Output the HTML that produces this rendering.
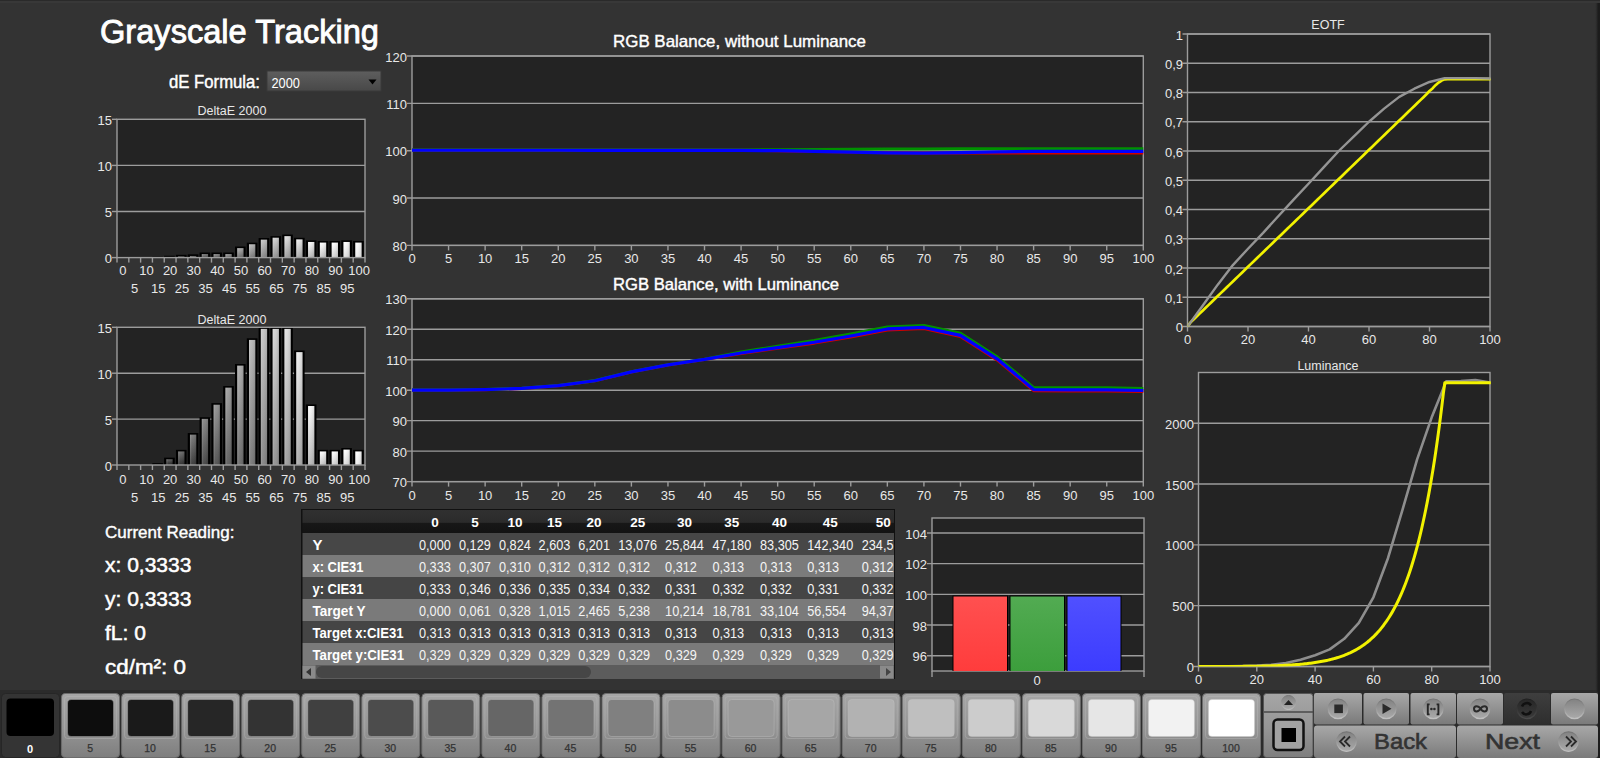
<!DOCTYPE html><html><head><meta charset="utf-8"><style>html,body{margin:0;padding:0;width:1600px;height:758px;overflow:hidden;background:#333}</style></head><body><svg width="1600" height="758" viewBox="0 0 1600 758" font-family='"Liberation Sans", sans-serif' style="position:absolute;left:0;top:0">
<rect x="0" y="0" width="1600" height="758" fill="#333333"/>
<text x="100" y="42.5" font-size="34" fill="#ffffff" text-anchor="start" font-weight="normal" textLength="279" lengthAdjust="spacingAndGlyphs" stroke="#ffffff" stroke-width="0.9">Grayscale Tracking</text>
<text x="169" y="87.5" font-size="18" fill="#ffffff" text-anchor="start" font-weight="normal" textLength="91" lengthAdjust="spacingAndGlyphs" stroke="#fff" stroke-width="0.45">dE Formula:</text>
<defs><linearGradient id="dd" x1="0" y1="0" x2="0" y2="1"><stop offset="0" stop-color="#5e5e5e"/><stop offset="1" stop-color="#484848"/></linearGradient></defs>
<rect x="267" y="71" width="114" height="20" fill="url(#dd)" stroke="#3a3a3a" stroke-width="1"/>
<text x="271.5" y="87.8" font-size="14.5" fill="#ffffff" text-anchor="start" font-weight="normal" textLength="28.5" lengthAdjust="spacingAndGlyphs">2000</text>
<polygon points="368.5,79.5 376.5,79.5 372.5,84.5" fill="#000"/>
<defs>
</defs>
<linearGradient id="barhl" x1="0" y1="0" x2="1" y2="0"><stop offset="0" stop-color="#fff" stop-opacity="0.22"/><stop offset="0.3" stop-color="#fff" stop-opacity="0.05"/><stop offset="1" stop-color="#000" stop-opacity="0.12"/></linearGradient>
<rect x="117" y="119.3" width="248" height="138.3" fill="#232323"/>
<line x1="117" y1="211.5" x2="365" y2="211.5" stroke="#9c9c9c" stroke-width="1.4"/>
<line x1="117" y1="165.4" x2="365" y2="165.4" stroke="#9c9c9c" stroke-width="1.4"/>
<line x1="112" y1="257.6" x2="117" y2="257.6" stroke="#9c9c9c" stroke-width="1.4"/>
<text x="112" y="263.1" font-size="13" fill="#e8e8e8" text-anchor="end" font-weight="normal" >0</text>
<line x1="112" y1="211.5" x2="117" y2="211.5" stroke="#9c9c9c" stroke-width="1.4"/>
<text x="112" y="217" font-size="13" fill="#e8e8e8" text-anchor="end" font-weight="normal" >5</text>
<line x1="112" y1="165.4" x2="117" y2="165.4" stroke="#9c9c9c" stroke-width="1.4"/>
<text x="112" y="170.9" font-size="13" fill="#e8e8e8" text-anchor="end" font-weight="normal" >10</text>
<line x1="112" y1="119.3" x2="117" y2="119.3" stroke="#9c9c9c" stroke-width="1.4"/>
<text x="112" y="124.8" font-size="13" fill="#e8e8e8" text-anchor="end" font-weight="normal" >15</text>
<linearGradient id="ga0" x1="0" y1="0" x2="0" y2="1"><stop offset="0" stop-color="rgb(45,45,45)"/><stop offset="1" stop-color="rgb(0,0,0)"/></linearGradient>
<linearGradient id="ga1" x1="0" y1="0" x2="0" y2="1"><stop offset="0" stop-color="rgb(58,58,58)"/><stop offset="1" stop-color="rgb(0,0,0)"/></linearGradient>
<linearGradient id="ga2" x1="0" y1="0" x2="0" y2="1"><stop offset="0" stop-color="rgb(71,71,71)"/><stop offset="1" stop-color="rgb(4,4,4)"/></linearGradient>
<rect x="140.52" y="257.14" width="10.61" height="0.46" fill="#000"/>
<rect x="142.72" y="258.74" width="6.31" height="0" fill="url(#ga2)"/>
<rect x="142.72" y="258.74" width="6.31" height="0" fill="url(#barhl)"/>
<linearGradient id="ga3" x1="0" y1="0" x2="0" y2="1"><stop offset="0" stop-color="rgb(83,83,83)"/><stop offset="1" stop-color="rgb(16,16,16)"/></linearGradient>
<rect x="152.33" y="256.68" width="10.61" height="0.92" fill="#000"/>
<rect x="154.53" y="258.28" width="6.31" height="0" fill="url(#ga3)"/>
<rect x="154.53" y="258.28" width="6.31" height="0" fill="url(#barhl)"/>
<linearGradient id="ga4" x1="0" y1="0" x2="0" y2="1"><stop offset="0" stop-color="rgb(96,96,96)"/><stop offset="1" stop-color="rgb(29,29,29)"/></linearGradient>
<rect x="164.14" y="255.76" width="10.61" height="1.84" fill="#000"/>
<rect x="166.34" y="257.36" width="6.31" height="0.24" fill="url(#ga4)"/>
<rect x="166.34" y="257.36" width="6.31" height="0.24" fill="url(#barhl)"/>
<linearGradient id="ga5" x1="0" y1="0" x2="0" y2="1"><stop offset="0" stop-color="rgb(109,109,109)"/><stop offset="1" stop-color="rgb(42,42,42)"/></linearGradient>
<rect x="175.95" y="254.83" width="10.61" height="2.77" fill="#000"/>
<rect x="178.15" y="256.43" width="6.31" height="1.17" fill="url(#ga5)"/>
<rect x="178.15" y="256.43" width="6.31" height="1.17" fill="url(#barhl)"/>
<linearGradient id="ga6" x1="0" y1="0" x2="0" y2="1"><stop offset="0" stop-color="rgb(121,121,121)"/><stop offset="1" stop-color="rgb(54,54,54)"/></linearGradient>
<rect x="187.76" y="254.37" width="10.61" height="3.23" fill="#000"/>
<rect x="189.96" y="255.97" width="6.31" height="1.63" fill="url(#ga6)"/>
<rect x="189.96" y="255.97" width="6.31" height="1.63" fill="url(#barhl)"/>
<linearGradient id="ga7" x1="0" y1="0" x2="0" y2="1"><stop offset="0" stop-color="rgb(134,134,134)"/><stop offset="1" stop-color="rgb(67,67,67)"/></linearGradient>
<rect x="199.57" y="252.53" width="10.61" height="5.07" fill="#000"/>
<rect x="201.77" y="254.13" width="6.31" height="3.47" fill="url(#ga7)"/>
<rect x="201.77" y="254.13" width="6.31" height="3.47" fill="url(#barhl)"/>
<linearGradient id="ga8" x1="0" y1="0" x2="0" y2="1"><stop offset="0" stop-color="rgb(147,147,147)"/><stop offset="1" stop-color="rgb(80,80,80)"/></linearGradient>
<rect x="211.38" y="252.53" width="10.61" height="5.07" fill="#000"/>
<rect x="213.58" y="254.13" width="6.31" height="3.47" fill="url(#ga8)"/>
<rect x="213.58" y="254.13" width="6.31" height="3.47" fill="url(#barhl)"/>
<linearGradient id="ga9" x1="0" y1="0" x2="0" y2="1"><stop offset="0" stop-color="rgb(160,160,160)"/><stop offset="1" stop-color="rgb(93,93,93)"/></linearGradient>
<rect x="223.19" y="252.53" width="10.61" height="5.07" fill="#000"/>
<rect x="225.39" y="254.13" width="6.31" height="3.47" fill="url(#ga9)"/>
<rect x="225.39" y="254.13" width="6.31" height="3.47" fill="url(#barhl)"/>
<linearGradient id="ga10" x1="0" y1="0" x2="0" y2="1"><stop offset="0" stop-color="rgb(173,173,173)"/><stop offset="1" stop-color="rgb(106,106,106)"/></linearGradient>
<rect x="235" y="246.54" width="10.61" height="11.06" fill="#000"/>
<rect x="237.2" y="248.14" width="6.31" height="9.46" fill="url(#ga10)"/>
<rect x="237.2" y="248.14" width="6.31" height="9.46" fill="url(#barhl)"/>
<linearGradient id="ga11" x1="0" y1="0" x2="0" y2="1"><stop offset="0" stop-color="rgb(185,185,185)"/><stop offset="1" stop-color="rgb(118,118,118)"/></linearGradient>
<rect x="246.8" y="242.66" width="10.61" height="14.94" fill="#000"/>
<rect x="249" y="244.26" width="6.31" height="13.34" fill="url(#ga11)"/>
<rect x="249" y="244.26" width="6.31" height="13.34" fill="url(#barhl)"/>
<linearGradient id="ga12" x1="0" y1="0" x2="0" y2="1"><stop offset="0" stop-color="rgb(198,198,198)"/><stop offset="1" stop-color="rgb(131,131,131)"/></linearGradient>
<rect x="258.61" y="238.05" width="10.61" height="19.55" fill="#000"/>
<rect x="260.81" y="239.65" width="6.31" height="17.95" fill="url(#ga12)"/>
<rect x="260.81" y="239.65" width="6.31" height="17.95" fill="url(#barhl)"/>
<linearGradient id="ga13" x1="0" y1="0" x2="0" y2="1"><stop offset="0" stop-color="rgb(211,211,211)"/><stop offset="1" stop-color="rgb(144,144,144)"/></linearGradient>
<rect x="270.42" y="236.12" width="10.61" height="21.48" fill="#000"/>
<rect x="272.62" y="237.72" width="6.31" height="19.88" fill="url(#ga13)"/>
<rect x="272.62" y="237.72" width="6.31" height="19.88" fill="url(#barhl)"/>
<linearGradient id="ga14" x1="0" y1="0" x2="0" y2="1"><stop offset="0" stop-color="rgb(223,223,223)"/><stop offset="1" stop-color="rgb(156,156,156)"/></linearGradient>
<rect x="282.23" y="234.55" width="10.61" height="23.05" fill="#000"/>
<rect x="284.43" y="236.15" width="6.31" height="21.45" fill="url(#ga14)"/>
<rect x="284.43" y="236.15" width="6.31" height="21.45" fill="url(#barhl)"/>
<linearGradient id="ga15" x1="0" y1="0" x2="0" y2="1"><stop offset="0" stop-color="rgb(236,236,236)"/><stop offset="1" stop-color="rgb(169,169,169)"/></linearGradient>
<rect x="294.04" y="237.78" width="10.61" height="19.82" fill="#000"/>
<rect x="296.24" y="239.38" width="6.31" height="18.22" fill="url(#ga15)"/>
<rect x="296.24" y="239.38" width="6.31" height="18.22" fill="url(#barhl)"/>
<linearGradient id="ga16" x1="0" y1="0" x2="0" y2="1"><stop offset="0" stop-color="rgb(249,249,249)"/><stop offset="1" stop-color="rgb(182,182,182)"/></linearGradient>
<rect x="305.85" y="240.36" width="10.61" height="17.24" fill="#000"/>
<rect x="308.05" y="241.96" width="6.31" height="15.64" fill="url(#ga16)"/>
<rect x="308.05" y="241.96" width="6.31" height="15.64" fill="url(#barhl)"/>
<linearGradient id="ga17" x1="0" y1="0" x2="0" y2="1"><stop offset="0" stop-color="rgb(255,255,255)"/><stop offset="1" stop-color="rgb(195,195,195)"/></linearGradient>
<rect x="317.66" y="241" width="10.61" height="16.6" fill="#000"/>
<rect x="319.86" y="242.6" width="6.31" height="15" fill="url(#ga17)"/>
<rect x="319.86" y="242.6" width="6.31" height="15" fill="url(#barhl)"/>
<linearGradient id="ga18" x1="0" y1="0" x2="0" y2="1"><stop offset="0" stop-color="rgb(255,255,255)"/><stop offset="1" stop-color="rgb(208,208,208)"/></linearGradient>
<rect x="329.47" y="241" width="10.61" height="16.6" fill="#000"/>
<rect x="331.67" y="242.6" width="6.31" height="15" fill="url(#ga18)"/>
<rect x="331.67" y="242.6" width="6.31" height="15" fill="url(#barhl)"/>
<linearGradient id="ga19" x1="0" y1="0" x2="0" y2="1"><stop offset="0" stop-color="rgb(255,255,255)"/><stop offset="1" stop-color="rgb(220,220,220)"/></linearGradient>
<rect x="341.28" y="240.36" width="10.61" height="17.24" fill="#000"/>
<rect x="343.48" y="241.96" width="6.31" height="15.64" fill="url(#ga19)"/>
<rect x="343.48" y="241.96" width="6.31" height="15.64" fill="url(#barhl)"/>
<linearGradient id="ga20" x1="0" y1="0" x2="0" y2="1"><stop offset="0" stop-color="rgb(255,255,255)"/><stop offset="1" stop-color="rgb(233,233,233)"/></linearGradient>
<rect x="353.09" y="241" width="10.61" height="16.6" fill="#000"/>
<rect x="355.29" y="242.6" width="6.31" height="15" fill="url(#ga20)"/>
<rect x="355.29" y="242.6" width="6.31" height="15" fill="url(#barhl)"/>
<rect x="117" y="119.3" width="248" height="138.3" fill="none" stroke="#9c9c9c" stroke-width="1.4"/>
<line x1="117" y1="257.6" x2="117" y2="262.6" stroke="#9c9c9c" stroke-width="1.4"/>
<line x1="128.81" y1="257.6" x2="128.81" y2="262.6" stroke="#9c9c9c" stroke-width="1.4"/>
<line x1="140.62" y1="257.6" x2="140.62" y2="262.6" stroke="#9c9c9c" stroke-width="1.4"/>
<line x1="152.43" y1="257.6" x2="152.43" y2="262.6" stroke="#9c9c9c" stroke-width="1.4"/>
<line x1="164.24" y1="257.6" x2="164.24" y2="262.6" stroke="#9c9c9c" stroke-width="1.4"/>
<line x1="176.05" y1="257.6" x2="176.05" y2="262.6" stroke="#9c9c9c" stroke-width="1.4"/>
<line x1="187.86" y1="257.6" x2="187.86" y2="262.6" stroke="#9c9c9c" stroke-width="1.4"/>
<line x1="199.67" y1="257.6" x2="199.67" y2="262.6" stroke="#9c9c9c" stroke-width="1.4"/>
<line x1="211.48" y1="257.6" x2="211.48" y2="262.6" stroke="#9c9c9c" stroke-width="1.4"/>
<line x1="223.29" y1="257.6" x2="223.29" y2="262.6" stroke="#9c9c9c" stroke-width="1.4"/>
<line x1="235.1" y1="257.6" x2="235.1" y2="262.6" stroke="#9c9c9c" stroke-width="1.4"/>
<line x1="246.9" y1="257.6" x2="246.9" y2="262.6" stroke="#9c9c9c" stroke-width="1.4"/>
<line x1="258.71" y1="257.6" x2="258.71" y2="262.6" stroke="#9c9c9c" stroke-width="1.4"/>
<line x1="270.52" y1="257.6" x2="270.52" y2="262.6" stroke="#9c9c9c" stroke-width="1.4"/>
<line x1="282.33" y1="257.6" x2="282.33" y2="262.6" stroke="#9c9c9c" stroke-width="1.4"/>
<line x1="294.14" y1="257.6" x2="294.14" y2="262.6" stroke="#9c9c9c" stroke-width="1.4"/>
<line x1="305.95" y1="257.6" x2="305.95" y2="262.6" stroke="#9c9c9c" stroke-width="1.4"/>
<line x1="317.76" y1="257.6" x2="317.76" y2="262.6" stroke="#9c9c9c" stroke-width="1.4"/>
<line x1="329.57" y1="257.6" x2="329.57" y2="262.6" stroke="#9c9c9c" stroke-width="1.4"/>
<line x1="341.38" y1="257.6" x2="341.38" y2="262.6" stroke="#9c9c9c" stroke-width="1.4"/>
<line x1="353.19" y1="257.6" x2="353.19" y2="262.6" stroke="#9c9c9c" stroke-width="1.4"/>
<line x1="365" y1="257.6" x2="365" y2="262.6" stroke="#9c9c9c" stroke-width="1.4"/>
<text x="122.9" y="275" font-size="13" fill="#e8e8e8" text-anchor="middle" font-weight="normal" >0</text>
<text x="134.71" y="293" font-size="13" fill="#e8e8e8" text-anchor="middle" font-weight="normal" >5</text>
<text x="146.52" y="275" font-size="13" fill="#e8e8e8" text-anchor="middle" font-weight="normal" >10</text>
<text x="158.33" y="293" font-size="13" fill="#e8e8e8" text-anchor="middle" font-weight="normal" >15</text>
<text x="170.14" y="275" font-size="13" fill="#e8e8e8" text-anchor="middle" font-weight="normal" >20</text>
<text x="181.95" y="293" font-size="13" fill="#e8e8e8" text-anchor="middle" font-weight="normal" >25</text>
<text x="193.76" y="275" font-size="13" fill="#e8e8e8" text-anchor="middle" font-weight="normal" >30</text>
<text x="205.57" y="293" font-size="13" fill="#e8e8e8" text-anchor="middle" font-weight="normal" >35</text>
<text x="217.38" y="275" font-size="13" fill="#e8e8e8" text-anchor="middle" font-weight="normal" >40</text>
<text x="229.19" y="293" font-size="13" fill="#e8e8e8" text-anchor="middle" font-weight="normal" >45</text>
<text x="241" y="275" font-size="13" fill="#e8e8e8" text-anchor="middle" font-weight="normal" >50</text>
<text x="252.81" y="293" font-size="13" fill="#e8e8e8" text-anchor="middle" font-weight="normal" >55</text>
<text x="264.62" y="275" font-size="13" fill="#e8e8e8" text-anchor="middle" font-weight="normal" >60</text>
<text x="276.43" y="293" font-size="13" fill="#e8e8e8" text-anchor="middle" font-weight="normal" >65</text>
<text x="288.24" y="275" font-size="13" fill="#e8e8e8" text-anchor="middle" font-weight="normal" >70</text>
<text x="300.05" y="293" font-size="13" fill="#e8e8e8" text-anchor="middle" font-weight="normal" >75</text>
<text x="311.86" y="275" font-size="13" fill="#e8e8e8" text-anchor="middle" font-weight="normal" >80</text>
<text x="323.67" y="293" font-size="13" fill="#e8e8e8" text-anchor="middle" font-weight="normal" >85</text>
<text x="335.48" y="275" font-size="13" fill="#e8e8e8" text-anchor="middle" font-weight="normal" >90</text>
<text x="347.29" y="293" font-size="13" fill="#e8e8e8" text-anchor="middle" font-weight="normal" >95</text>
<text x="359.1" y="275" font-size="13" fill="#e8e8e8" text-anchor="middle" font-weight="normal" >100</text>
<text x="232" y="115" font-size="12.5" fill="#e8e8e8" text-anchor="middle" font-weight="normal" >DeltaE 2000</text>
<linearGradient id="barhl" x1="0" y1="0" x2="1" y2="0"><stop offset="0" stop-color="#fff" stop-opacity="0.22"/><stop offset="0.3" stop-color="#fff" stop-opacity="0.05"/><stop offset="1" stop-color="#000" stop-opacity="0.12"/></linearGradient>
<rect x="117" y="327.3" width="248" height="137.7" fill="#232323"/>
<line x1="117" y1="419.1" x2="365" y2="419.1" stroke="#9c9c9c" stroke-width="1.4"/>
<line x1="117" y1="373.2" x2="365" y2="373.2" stroke="#9c9c9c" stroke-width="1.4"/>
<line x1="112" y1="465" x2="117" y2="465" stroke="#9c9c9c" stroke-width="1.4"/>
<text x="112" y="470.5" font-size="13" fill="#e8e8e8" text-anchor="end" font-weight="normal" >0</text>
<line x1="112" y1="419.1" x2="117" y2="419.1" stroke="#9c9c9c" stroke-width="1.4"/>
<text x="112" y="424.6" font-size="13" fill="#e8e8e8" text-anchor="end" font-weight="normal" >5</text>
<line x1="112" y1="373.2" x2="117" y2="373.2" stroke="#9c9c9c" stroke-width="1.4"/>
<text x="112" y="378.7" font-size="13" fill="#e8e8e8" text-anchor="end" font-weight="normal" >10</text>
<line x1="112" y1="327.3" x2="117" y2="327.3" stroke="#9c9c9c" stroke-width="1.4"/>
<text x="112" y="332.8" font-size="13" fill="#e8e8e8" text-anchor="end" font-weight="normal" >15</text>
<linearGradient id="gb0" x1="0" y1="0" x2="0" y2="1"><stop offset="0" stop-color="rgb(45,45,45)"/><stop offset="1" stop-color="rgb(0,0,0)"/></linearGradient>
<linearGradient id="gb1" x1="0" y1="0" x2="0" y2="1"><stop offset="0" stop-color="rgb(58,58,58)"/><stop offset="1" stop-color="rgb(0,0,0)"/></linearGradient>
<linearGradient id="gb2" x1="0" y1="0" x2="0" y2="1"><stop offset="0" stop-color="rgb(71,71,71)"/><stop offset="1" stop-color="rgb(4,4,4)"/></linearGradient>
<linearGradient id="gb3" x1="0" y1="0" x2="0" y2="1"><stop offset="0" stop-color="rgb(83,83,83)"/><stop offset="1" stop-color="rgb(16,16,16)"/></linearGradient>
<rect x="152.33" y="463.16" width="10.61" height="1.84" fill="#000"/>
<rect x="154.53" y="464.76" width="6.31" height="0.24" fill="url(#gb3)"/>
<rect x="154.53" y="464.76" width="6.31" height="0.24" fill="url(#barhl)"/>
<linearGradient id="gb4" x1="0" y1="0" x2="0" y2="1"><stop offset="0" stop-color="rgb(96,96,96)"/><stop offset="1" stop-color="rgb(29,29,29)"/></linearGradient>
<rect x="164.14" y="457.66" width="10.61" height="7.34" fill="#000"/>
<rect x="166.34" y="459.26" width="6.31" height="5.74" fill="url(#gb4)"/>
<rect x="166.34" y="459.26" width="6.31" height="5.74" fill="url(#barhl)"/>
<linearGradient id="gb5" x1="0" y1="0" x2="0" y2="1"><stop offset="0" stop-color="rgb(109,109,109)"/><stop offset="1" stop-color="rgb(42,42,42)"/></linearGradient>
<rect x="175.95" y="449.85" width="10.61" height="15.15" fill="#000"/>
<rect x="178.15" y="451.45" width="6.31" height="13.55" fill="url(#gb5)"/>
<rect x="178.15" y="451.45" width="6.31" height="13.55" fill="url(#barhl)"/>
<linearGradient id="gb6" x1="0" y1="0" x2="0" y2="1"><stop offset="0" stop-color="rgb(121,121,121)"/><stop offset="1" stop-color="rgb(54,54,54)"/></linearGradient>
<rect x="187.76" y="433.05" width="10.61" height="31.95" fill="#000"/>
<rect x="189.96" y="434.65" width="6.31" height="30.35" fill="url(#gb6)"/>
<rect x="189.96" y="434.65" width="6.31" height="30.35" fill="url(#barhl)"/>
<linearGradient id="gb7" x1="0" y1="0" x2="0" y2="1"><stop offset="0" stop-color="rgb(134,134,134)"/><stop offset="1" stop-color="rgb(67,67,67)"/></linearGradient>
<rect x="199.57" y="417.26" width="10.61" height="47.74" fill="#000"/>
<rect x="201.77" y="418.86" width="6.31" height="46.14" fill="url(#gb7)"/>
<rect x="201.77" y="418.86" width="6.31" height="46.14" fill="url(#barhl)"/>
<linearGradient id="gb8" x1="0" y1="0" x2="0" y2="1"><stop offset="0" stop-color="rgb(147,147,147)"/><stop offset="1" stop-color="rgb(80,80,80)"/></linearGradient>
<rect x="211.38" y="403.13" width="10.61" height="61.87" fill="#000"/>
<rect x="213.58" y="404.73" width="6.31" height="60.27" fill="url(#gb8)"/>
<rect x="213.58" y="404.73" width="6.31" height="60.27" fill="url(#barhl)"/>
<linearGradient id="gb9" x1="0" y1="0" x2="0" y2="1"><stop offset="0" stop-color="rgb(160,160,160)"/><stop offset="1" stop-color="rgb(93,93,93)"/></linearGradient>
<rect x="223.19" y="386.05" width="10.61" height="78.95" fill="#000"/>
<rect x="225.39" y="387.65" width="6.31" height="77.35" fill="url(#gb9)"/>
<rect x="225.39" y="387.65" width="6.31" height="77.35" fill="url(#barhl)"/>
<linearGradient id="gb10" x1="0" y1="0" x2="0" y2="1"><stop offset="0" stop-color="rgb(173,173,173)"/><stop offset="1" stop-color="rgb(106,106,106)"/></linearGradient>
<rect x="235" y="364.02" width="10.61" height="100.98" fill="#000"/>
<rect x="237.2" y="365.62" width="6.31" height="99.38" fill="url(#gb10)"/>
<rect x="237.2" y="365.62" width="6.31" height="99.38" fill="url(#barhl)"/>
<linearGradient id="gb11" x1="0" y1="0" x2="0" y2="1"><stop offset="0" stop-color="rgb(185,185,185)"/><stop offset="1" stop-color="rgb(118,118,118)"/></linearGradient>
<rect x="246.8" y="338.32" width="10.61" height="126.68" fill="#000"/>
<rect x="249" y="339.92" width="6.31" height="125.08" fill="url(#gb11)"/>
<rect x="249" y="339.92" width="6.31" height="125.08" fill="url(#barhl)"/>
<linearGradient id="gb12" x1="0" y1="0" x2="0" y2="1"><stop offset="0" stop-color="rgb(198,198,198)"/><stop offset="1" stop-color="rgb(131,131,131)"/></linearGradient>
<rect x="258.61" y="327.3" width="10.61" height="137.7" fill="#000"/>
<rect x="260.81" y="328.9" width="6.31" height="136.1" fill="url(#gb12)"/>
<rect x="260.81" y="328.9" width="6.31" height="136.1" fill="url(#barhl)"/>
<linearGradient id="gb13" x1="0" y1="0" x2="0" y2="1"><stop offset="0" stop-color="rgb(211,211,211)"/><stop offset="1" stop-color="rgb(144,144,144)"/></linearGradient>
<rect x="270.42" y="327.3" width="10.61" height="137.7" fill="#000"/>
<rect x="272.62" y="328.9" width="6.31" height="136.1" fill="url(#gb13)"/>
<rect x="272.62" y="328.9" width="6.31" height="136.1" fill="url(#barhl)"/>
<linearGradient id="gb14" x1="0" y1="0" x2="0" y2="1"><stop offset="0" stop-color="rgb(223,223,223)"/><stop offset="1" stop-color="rgb(156,156,156)"/></linearGradient>
<rect x="282.23" y="327.3" width="10.61" height="137.7" fill="#000"/>
<rect x="284.43" y="328.9" width="6.31" height="136.1" fill="url(#gb14)"/>
<rect x="284.43" y="328.9" width="6.31" height="136.1" fill="url(#barhl)"/>
<linearGradient id="gb15" x1="0" y1="0" x2="0" y2="1"><stop offset="0" stop-color="rgb(236,236,236)"/><stop offset="1" stop-color="rgb(169,169,169)"/></linearGradient>
<rect x="294.04" y="350.53" width="10.61" height="114.47" fill="#000"/>
<rect x="296.24" y="352.13" width="6.31" height="112.87" fill="url(#gb15)"/>
<rect x="296.24" y="352.13" width="6.31" height="112.87" fill="url(#barhl)"/>
<linearGradient id="gb16" x1="0" y1="0" x2="0" y2="1"><stop offset="0" stop-color="rgb(249,249,249)"/><stop offset="1" stop-color="rgb(182,182,182)"/></linearGradient>
<rect x="305.85" y="404.41" width="10.61" height="60.59" fill="#000"/>
<rect x="308.05" y="406.01" width="6.31" height="58.99" fill="url(#gb16)"/>
<rect x="308.05" y="406.01" width="6.31" height="58.99" fill="url(#barhl)"/>
<linearGradient id="gb17" x1="0" y1="0" x2="0" y2="1"><stop offset="0" stop-color="rgb(255,255,255)"/><stop offset="1" stop-color="rgb(195,195,195)"/></linearGradient>
<rect x="317.66" y="449.85" width="10.61" height="15.15" fill="#000"/>
<rect x="319.86" y="451.45" width="6.31" height="13.55" fill="url(#gb17)"/>
<rect x="319.86" y="451.45" width="6.31" height="13.55" fill="url(#barhl)"/>
<linearGradient id="gb18" x1="0" y1="0" x2="0" y2="1"><stop offset="0" stop-color="rgb(255,255,255)"/><stop offset="1" stop-color="rgb(208,208,208)"/></linearGradient>
<rect x="329.47" y="449.85" width="10.61" height="15.15" fill="#000"/>
<rect x="331.67" y="451.45" width="6.31" height="13.55" fill="url(#gb18)"/>
<rect x="331.67" y="451.45" width="6.31" height="13.55" fill="url(#barhl)"/>
<linearGradient id="gb19" x1="0" y1="0" x2="0" y2="1"><stop offset="0" stop-color="rgb(255,255,255)"/><stop offset="1" stop-color="rgb(220,220,220)"/></linearGradient>
<rect x="341.28" y="448.02" width="10.61" height="16.98" fill="#000"/>
<rect x="343.48" y="449.62" width="6.31" height="15.38" fill="url(#gb19)"/>
<rect x="343.48" y="449.62" width="6.31" height="15.38" fill="url(#barhl)"/>
<linearGradient id="gb20" x1="0" y1="0" x2="0" y2="1"><stop offset="0" stop-color="rgb(255,255,255)"/><stop offset="1" stop-color="rgb(233,233,233)"/></linearGradient>
<rect x="353.09" y="449.85" width="10.61" height="15.15" fill="#000"/>
<rect x="355.29" y="451.45" width="6.31" height="13.55" fill="url(#gb20)"/>
<rect x="355.29" y="451.45" width="6.31" height="13.55" fill="url(#barhl)"/>
<rect x="117" y="327.3" width="248" height="137.7" fill="none" stroke="#9c9c9c" stroke-width="1.4"/>
<line x1="117" y1="465" x2="117" y2="470" stroke="#9c9c9c" stroke-width="1.4"/>
<line x1="128.81" y1="465" x2="128.81" y2="470" stroke="#9c9c9c" stroke-width="1.4"/>
<line x1="140.62" y1="465" x2="140.62" y2="470" stroke="#9c9c9c" stroke-width="1.4"/>
<line x1="152.43" y1="465" x2="152.43" y2="470" stroke="#9c9c9c" stroke-width="1.4"/>
<line x1="164.24" y1="465" x2="164.24" y2="470" stroke="#9c9c9c" stroke-width="1.4"/>
<line x1="176.05" y1="465" x2="176.05" y2="470" stroke="#9c9c9c" stroke-width="1.4"/>
<line x1="187.86" y1="465" x2="187.86" y2="470" stroke="#9c9c9c" stroke-width="1.4"/>
<line x1="199.67" y1="465" x2="199.67" y2="470" stroke="#9c9c9c" stroke-width="1.4"/>
<line x1="211.48" y1="465" x2="211.48" y2="470" stroke="#9c9c9c" stroke-width="1.4"/>
<line x1="223.29" y1="465" x2="223.29" y2="470" stroke="#9c9c9c" stroke-width="1.4"/>
<line x1="235.1" y1="465" x2="235.1" y2="470" stroke="#9c9c9c" stroke-width="1.4"/>
<line x1="246.9" y1="465" x2="246.9" y2="470" stroke="#9c9c9c" stroke-width="1.4"/>
<line x1="258.71" y1="465" x2="258.71" y2="470" stroke="#9c9c9c" stroke-width="1.4"/>
<line x1="270.52" y1="465" x2="270.52" y2="470" stroke="#9c9c9c" stroke-width="1.4"/>
<line x1="282.33" y1="465" x2="282.33" y2="470" stroke="#9c9c9c" stroke-width="1.4"/>
<line x1="294.14" y1="465" x2="294.14" y2="470" stroke="#9c9c9c" stroke-width="1.4"/>
<line x1="305.95" y1="465" x2="305.95" y2="470" stroke="#9c9c9c" stroke-width="1.4"/>
<line x1="317.76" y1="465" x2="317.76" y2="470" stroke="#9c9c9c" stroke-width="1.4"/>
<line x1="329.57" y1="465" x2="329.57" y2="470" stroke="#9c9c9c" stroke-width="1.4"/>
<line x1="341.38" y1="465" x2="341.38" y2="470" stroke="#9c9c9c" stroke-width="1.4"/>
<line x1="353.19" y1="465" x2="353.19" y2="470" stroke="#9c9c9c" stroke-width="1.4"/>
<line x1="365" y1="465" x2="365" y2="470" stroke="#9c9c9c" stroke-width="1.4"/>
<text x="122.9" y="484.2" font-size="13" fill="#e8e8e8" text-anchor="middle" font-weight="normal" >0</text>
<text x="134.71" y="501.7" font-size="13" fill="#e8e8e8" text-anchor="middle" font-weight="normal" >5</text>
<text x="146.52" y="484.2" font-size="13" fill="#e8e8e8" text-anchor="middle" font-weight="normal" >10</text>
<text x="158.33" y="501.7" font-size="13" fill="#e8e8e8" text-anchor="middle" font-weight="normal" >15</text>
<text x="170.14" y="484.2" font-size="13" fill="#e8e8e8" text-anchor="middle" font-weight="normal" >20</text>
<text x="181.95" y="501.7" font-size="13" fill="#e8e8e8" text-anchor="middle" font-weight="normal" >25</text>
<text x="193.76" y="484.2" font-size="13" fill="#e8e8e8" text-anchor="middle" font-weight="normal" >30</text>
<text x="205.57" y="501.7" font-size="13" fill="#e8e8e8" text-anchor="middle" font-weight="normal" >35</text>
<text x="217.38" y="484.2" font-size="13" fill="#e8e8e8" text-anchor="middle" font-weight="normal" >40</text>
<text x="229.19" y="501.7" font-size="13" fill="#e8e8e8" text-anchor="middle" font-weight="normal" >45</text>
<text x="241" y="484.2" font-size="13" fill="#e8e8e8" text-anchor="middle" font-weight="normal" >50</text>
<text x="252.81" y="501.7" font-size="13" fill="#e8e8e8" text-anchor="middle" font-weight="normal" >55</text>
<text x="264.62" y="484.2" font-size="13" fill="#e8e8e8" text-anchor="middle" font-weight="normal" >60</text>
<text x="276.43" y="501.7" font-size="13" fill="#e8e8e8" text-anchor="middle" font-weight="normal" >65</text>
<text x="288.24" y="484.2" font-size="13" fill="#e8e8e8" text-anchor="middle" font-weight="normal" >70</text>
<text x="300.05" y="501.7" font-size="13" fill="#e8e8e8" text-anchor="middle" font-weight="normal" >75</text>
<text x="311.86" y="484.2" font-size="13" fill="#e8e8e8" text-anchor="middle" font-weight="normal" >80</text>
<text x="323.67" y="501.7" font-size="13" fill="#e8e8e8" text-anchor="middle" font-weight="normal" >85</text>
<text x="335.48" y="484.2" font-size="13" fill="#e8e8e8" text-anchor="middle" font-weight="normal" >90</text>
<text x="347.29" y="501.7" font-size="13" fill="#e8e8e8" text-anchor="middle" font-weight="normal" >95</text>
<text x="359.1" y="484.2" font-size="13" fill="#e8e8e8" text-anchor="middle" font-weight="normal" >100</text>
<text x="232" y="323.5" font-size="12.5" fill="#e8e8e8" text-anchor="middle" font-weight="normal" >DeltaE 2000</text>
<rect x="412" y="56" width="731.3" height="189.4" fill="#232323"/>
<line x1="407" y1="245.4" x2="1143.3" y2="245.4" stroke="#9c9c9c" stroke-width="1.4"/>
<text x="407" y="250.9" font-size="13" fill="#e8e8e8" text-anchor="end" font-weight="normal" >80</text>
<line x1="407" y1="198.05" x2="1143.3" y2="198.05" stroke="#9c9c9c" stroke-width="1.4"/>
<text x="407" y="203.55" font-size="13" fill="#e8e8e8" text-anchor="end" font-weight="normal" >90</text>
<line x1="407" y1="150.7" x2="1143.3" y2="150.7" stroke="#9c9c9c" stroke-width="1.4"/>
<text x="407" y="156.2" font-size="13" fill="#e8e8e8" text-anchor="end" font-weight="normal" >100</text>
<line x1="407" y1="103.35" x2="1143.3" y2="103.35" stroke="#9c9c9c" stroke-width="1.4"/>
<text x="407" y="108.85" font-size="13" fill="#e8e8e8" text-anchor="end" font-weight="normal" >110</text>
<line x1="407" y1="56" x2="1143.3" y2="56" stroke="#9c9c9c" stroke-width="1.4"/>
<text x="407" y="61.5" font-size="13" fill="#e8e8e8" text-anchor="end" font-weight="normal" >120</text>
<rect x="412" y="56" width="731.3" height="189.4" fill="none" stroke="#9c9c9c" stroke-width="1.4"/>
<line x1="412" y1="245.4" x2="412" y2="250.4" stroke="#9c9c9c" stroke-width="1.4"/>
<text x="412" y="263" font-size="13" fill="#e8e8e8" text-anchor="middle" font-weight="normal" >0</text>
<line x1="448.56" y1="245.4" x2="448.56" y2="250.4" stroke="#9c9c9c" stroke-width="1.4"/>
<text x="448.56" y="263" font-size="13" fill="#e8e8e8" text-anchor="middle" font-weight="normal" >5</text>
<line x1="485.13" y1="245.4" x2="485.13" y2="250.4" stroke="#9c9c9c" stroke-width="1.4"/>
<text x="485.13" y="263" font-size="13" fill="#e8e8e8" text-anchor="middle" font-weight="normal" >10</text>
<line x1="521.69" y1="245.4" x2="521.69" y2="250.4" stroke="#9c9c9c" stroke-width="1.4"/>
<text x="521.69" y="263" font-size="13" fill="#e8e8e8" text-anchor="middle" font-weight="normal" >15</text>
<line x1="558.26" y1="245.4" x2="558.26" y2="250.4" stroke="#9c9c9c" stroke-width="1.4"/>
<text x="558.26" y="263" font-size="13" fill="#e8e8e8" text-anchor="middle" font-weight="normal" >20</text>
<line x1="594.83" y1="245.4" x2="594.83" y2="250.4" stroke="#9c9c9c" stroke-width="1.4"/>
<text x="594.83" y="263" font-size="13" fill="#e8e8e8" text-anchor="middle" font-weight="normal" >25</text>
<line x1="631.39" y1="245.4" x2="631.39" y2="250.4" stroke="#9c9c9c" stroke-width="1.4"/>
<text x="631.39" y="263" font-size="13" fill="#e8e8e8" text-anchor="middle" font-weight="normal" >30</text>
<line x1="667.96" y1="245.4" x2="667.96" y2="250.4" stroke="#9c9c9c" stroke-width="1.4"/>
<text x="667.96" y="263" font-size="13" fill="#e8e8e8" text-anchor="middle" font-weight="normal" >35</text>
<line x1="704.52" y1="245.4" x2="704.52" y2="250.4" stroke="#9c9c9c" stroke-width="1.4"/>
<text x="704.52" y="263" font-size="13" fill="#e8e8e8" text-anchor="middle" font-weight="normal" >40</text>
<line x1="741.09" y1="245.4" x2="741.09" y2="250.4" stroke="#9c9c9c" stroke-width="1.4"/>
<text x="741.09" y="263" font-size="13" fill="#e8e8e8" text-anchor="middle" font-weight="normal" >45</text>
<line x1="777.65" y1="245.4" x2="777.65" y2="250.4" stroke="#9c9c9c" stroke-width="1.4"/>
<text x="777.65" y="263" font-size="13" fill="#e8e8e8" text-anchor="middle" font-weight="normal" >50</text>
<line x1="814.21" y1="245.4" x2="814.21" y2="250.4" stroke="#9c9c9c" stroke-width="1.4"/>
<text x="814.21" y="263" font-size="13" fill="#e8e8e8" text-anchor="middle" font-weight="normal" >55</text>
<line x1="850.78" y1="245.4" x2="850.78" y2="250.4" stroke="#9c9c9c" stroke-width="1.4"/>
<text x="850.78" y="263" font-size="13" fill="#e8e8e8" text-anchor="middle" font-weight="normal" >60</text>
<line x1="887.35" y1="245.4" x2="887.35" y2="250.4" stroke="#9c9c9c" stroke-width="1.4"/>
<text x="887.35" y="263" font-size="13" fill="#e8e8e8" text-anchor="middle" font-weight="normal" >65</text>
<line x1="923.91" y1="245.4" x2="923.91" y2="250.4" stroke="#9c9c9c" stroke-width="1.4"/>
<text x="923.91" y="263" font-size="13" fill="#e8e8e8" text-anchor="middle" font-weight="normal" >70</text>
<line x1="960.48" y1="245.4" x2="960.48" y2="250.4" stroke="#9c9c9c" stroke-width="1.4"/>
<text x="960.48" y="263" font-size="13" fill="#e8e8e8" text-anchor="middle" font-weight="normal" >75</text>
<line x1="997.04" y1="245.4" x2="997.04" y2="250.4" stroke="#9c9c9c" stroke-width="1.4"/>
<text x="997.04" y="263" font-size="13" fill="#e8e8e8" text-anchor="middle" font-weight="normal" >80</text>
<line x1="1033.61" y1="245.4" x2="1033.61" y2="250.4" stroke="#9c9c9c" stroke-width="1.4"/>
<text x="1033.61" y="263" font-size="13" fill="#e8e8e8" text-anchor="middle" font-weight="normal" >85</text>
<line x1="1070.17" y1="245.4" x2="1070.17" y2="250.4" stroke="#9c9c9c" stroke-width="1.4"/>
<text x="1070.17" y="263" font-size="13" fill="#e8e8e8" text-anchor="middle" font-weight="normal" >90</text>
<line x1="1106.74" y1="245.4" x2="1106.74" y2="250.4" stroke="#9c9c9c" stroke-width="1.4"/>
<text x="1106.74" y="263" font-size="13" fill="#e8e8e8" text-anchor="middle" font-weight="normal" >95</text>
<line x1="1143.3" y1="245.4" x2="1143.3" y2="250.4" stroke="#9c9c9c" stroke-width="1.4"/>
<text x="1143.3" y="263" font-size="13" fill="#e8e8e8" text-anchor="middle" font-weight="normal" >100</text>
<svg x="412" y="56" width="731.3" height="189.4" overflow="hidden"><g transform="translate(-412,-56)">
<polyline points="412,150.23 448.56,150.23 485.13,150.23 521.69,150.23 558.26,150.23 594.83,150.23 631.39,150.23 667.96,150.23 704.52,150.23 741.09,150.23 777.65,150.7 814.21,151.41 850.78,152.12 887.35,152.83 923.91,153.07 960.48,153.07 997.04,153.07 1033.61,153.07 1070.17,153.07 1106.74,153.07 1143.3,153.07" fill="none" stroke="#d00000" stroke-width="3" stroke-linejoin="round" stroke-linecap="round" />
<polyline points="412,149.99 448.56,149.99 485.13,149.99 521.69,149.99 558.26,149.99 594.83,149.99 631.39,149.99 667.96,149.99 704.52,149.99 741.09,149.99 777.65,149.75 814.21,149.52 850.78,149.28 887.35,149.04 923.91,149.04 960.48,148.81 997.04,148.81 1033.61,148.81 1070.17,148.81 1106.74,148.81 1143.3,148.81" fill="none" stroke="#009000" stroke-width="3.1" stroke-linejoin="round" stroke-linecap="round" />
<polyline points="412,150.23 448.56,150.23 485.13,150.23 521.69,150.23 558.26,150.23 594.83,150.46 631.39,150.46 667.96,150.46 704.52,150.46 741.09,150.46 777.65,150.7 814.21,151.41 850.78,152.12 887.35,152.83 923.91,153.07 960.48,152.59 997.04,151.88 1033.61,151.41 1070.17,151.41 1106.74,151.41 1143.3,151.41" fill="none" stroke="#0000ff" stroke-width="3.2" stroke-linejoin="round" stroke-linecap="round" />
</g></svg>
<text x="613" y="47" font-size="17" fill="#ffffff" text-anchor="start" font-weight="normal" stroke="#fff" stroke-width="0.4" textLength="253" lengthAdjust="spacingAndGlyphs">RGB Balance, without Luminance</text>
<rect x="412" y="298.8" width="731.3" height="182.8" fill="#232323"/>
<line x1="407" y1="481.6" x2="1143.3" y2="481.6" stroke="#9c9c9c" stroke-width="1.4"/>
<text x="407" y="487.1" font-size="13" fill="#e8e8e8" text-anchor="end" font-weight="normal" >70</text>
<line x1="407" y1="451.13" x2="1143.3" y2="451.13" stroke="#9c9c9c" stroke-width="1.4"/>
<text x="407" y="456.63" font-size="13" fill="#e8e8e8" text-anchor="end" font-weight="normal" >80</text>
<line x1="407" y1="420.67" x2="1143.3" y2="420.67" stroke="#9c9c9c" stroke-width="1.4"/>
<text x="407" y="426.17" font-size="13" fill="#e8e8e8" text-anchor="end" font-weight="normal" >90</text>
<line x1="407" y1="390.2" x2="1143.3" y2="390.2" stroke="#9c9c9c" stroke-width="1.4"/>
<text x="407" y="395.7" font-size="13" fill="#e8e8e8" text-anchor="end" font-weight="normal" >100</text>
<line x1="407" y1="359.73" x2="1143.3" y2="359.73" stroke="#9c9c9c" stroke-width="1.4"/>
<text x="407" y="365.23" font-size="13" fill="#e8e8e8" text-anchor="end" font-weight="normal" >110</text>
<line x1="407" y1="329.27" x2="1143.3" y2="329.27" stroke="#9c9c9c" stroke-width="1.4"/>
<text x="407" y="334.77" font-size="13" fill="#e8e8e8" text-anchor="end" font-weight="normal" >120</text>
<line x1="407" y1="298.8" x2="1143.3" y2="298.8" stroke="#9c9c9c" stroke-width="1.4"/>
<text x="407" y="304.3" font-size="13" fill="#e8e8e8" text-anchor="end" font-weight="normal" >130</text>
<rect x="412" y="298.8" width="731.3" height="182.8" fill="none" stroke="#9c9c9c" stroke-width="1.4"/>
<line x1="412" y1="481.6" x2="412" y2="486.6" stroke="#9c9c9c" stroke-width="1.4"/>
<text x="412" y="500" font-size="13" fill="#e8e8e8" text-anchor="middle" font-weight="normal" >0</text>
<line x1="448.56" y1="481.6" x2="448.56" y2="486.6" stroke="#9c9c9c" stroke-width="1.4"/>
<text x="448.56" y="500" font-size="13" fill="#e8e8e8" text-anchor="middle" font-weight="normal" >5</text>
<line x1="485.13" y1="481.6" x2="485.13" y2="486.6" stroke="#9c9c9c" stroke-width="1.4"/>
<text x="485.13" y="500" font-size="13" fill="#e8e8e8" text-anchor="middle" font-weight="normal" >10</text>
<line x1="521.69" y1="481.6" x2="521.69" y2="486.6" stroke="#9c9c9c" stroke-width="1.4"/>
<text x="521.69" y="500" font-size="13" fill="#e8e8e8" text-anchor="middle" font-weight="normal" >15</text>
<line x1="558.26" y1="481.6" x2="558.26" y2="486.6" stroke="#9c9c9c" stroke-width="1.4"/>
<text x="558.26" y="500" font-size="13" fill="#e8e8e8" text-anchor="middle" font-weight="normal" >20</text>
<line x1="594.83" y1="481.6" x2="594.83" y2="486.6" stroke="#9c9c9c" stroke-width="1.4"/>
<text x="594.83" y="500" font-size="13" fill="#e8e8e8" text-anchor="middle" font-weight="normal" >25</text>
<line x1="631.39" y1="481.6" x2="631.39" y2="486.6" stroke="#9c9c9c" stroke-width="1.4"/>
<text x="631.39" y="500" font-size="13" fill="#e8e8e8" text-anchor="middle" font-weight="normal" >30</text>
<line x1="667.96" y1="481.6" x2="667.96" y2="486.6" stroke="#9c9c9c" stroke-width="1.4"/>
<text x="667.96" y="500" font-size="13" fill="#e8e8e8" text-anchor="middle" font-weight="normal" >35</text>
<line x1="704.52" y1="481.6" x2="704.52" y2="486.6" stroke="#9c9c9c" stroke-width="1.4"/>
<text x="704.52" y="500" font-size="13" fill="#e8e8e8" text-anchor="middle" font-weight="normal" >40</text>
<line x1="741.09" y1="481.6" x2="741.09" y2="486.6" stroke="#9c9c9c" stroke-width="1.4"/>
<text x="741.09" y="500" font-size="13" fill="#e8e8e8" text-anchor="middle" font-weight="normal" >45</text>
<line x1="777.65" y1="481.6" x2="777.65" y2="486.6" stroke="#9c9c9c" stroke-width="1.4"/>
<text x="777.65" y="500" font-size="13" fill="#e8e8e8" text-anchor="middle" font-weight="normal" >50</text>
<line x1="814.21" y1="481.6" x2="814.21" y2="486.6" stroke="#9c9c9c" stroke-width="1.4"/>
<text x="814.21" y="500" font-size="13" fill="#e8e8e8" text-anchor="middle" font-weight="normal" >55</text>
<line x1="850.78" y1="481.6" x2="850.78" y2="486.6" stroke="#9c9c9c" stroke-width="1.4"/>
<text x="850.78" y="500" font-size="13" fill="#e8e8e8" text-anchor="middle" font-weight="normal" >60</text>
<line x1="887.35" y1="481.6" x2="887.35" y2="486.6" stroke="#9c9c9c" stroke-width="1.4"/>
<text x="887.35" y="500" font-size="13" fill="#e8e8e8" text-anchor="middle" font-weight="normal" >65</text>
<line x1="923.91" y1="481.6" x2="923.91" y2="486.6" stroke="#9c9c9c" stroke-width="1.4"/>
<text x="923.91" y="500" font-size="13" fill="#e8e8e8" text-anchor="middle" font-weight="normal" >70</text>
<line x1="960.48" y1="481.6" x2="960.48" y2="486.6" stroke="#9c9c9c" stroke-width="1.4"/>
<text x="960.48" y="500" font-size="13" fill="#e8e8e8" text-anchor="middle" font-weight="normal" >75</text>
<line x1="997.04" y1="481.6" x2="997.04" y2="486.6" stroke="#9c9c9c" stroke-width="1.4"/>
<text x="997.04" y="500" font-size="13" fill="#e8e8e8" text-anchor="middle" font-weight="normal" >80</text>
<line x1="1033.61" y1="481.6" x2="1033.61" y2="486.6" stroke="#9c9c9c" stroke-width="1.4"/>
<text x="1033.61" y="500" font-size="13" fill="#e8e8e8" text-anchor="middle" font-weight="normal" >85</text>
<line x1="1070.17" y1="481.6" x2="1070.17" y2="486.6" stroke="#9c9c9c" stroke-width="1.4"/>
<text x="1070.17" y="500" font-size="13" fill="#e8e8e8" text-anchor="middle" font-weight="normal" >90</text>
<line x1="1106.74" y1="481.6" x2="1106.74" y2="486.6" stroke="#9c9c9c" stroke-width="1.4"/>
<text x="1106.74" y="500" font-size="13" fill="#e8e8e8" text-anchor="middle" font-weight="normal" >95</text>
<line x1="1143.3" y1="481.6" x2="1143.3" y2="486.6" stroke="#9c9c9c" stroke-width="1.4"/>
<text x="1143.3" y="500" font-size="13" fill="#e8e8e8" text-anchor="middle" font-weight="normal" >100</text>
<svg x="412" y="298.8" width="731.3" height="182.8" overflow="hidden"><g transform="translate(-412,-298.8)">
<polyline points="412,390.28 448.56,390.28 485.13,389.67 521.69,388.46 558.26,385.71 594.83,380.84 631.39,372 667.96,365 704.52,359.51 741.09,353.53 777.65,348.3 814.21,343.14 850.78,337.06 887.35,330.05 923.91,328.53 960.48,336.45 997.04,359.91 1033.61,390.68 1070.17,390.98 1106.74,390.98 1143.3,391.59" fill="none" stroke="#d00000" stroke-width="3" stroke-linejoin="round" stroke-linecap="round" />
<polyline points="412,390.05 448.56,390.05 485.13,389.44 521.69,388.22 558.26,385.48 594.83,380.6 631.39,371.77 667.96,364.76 704.52,359.28 741.09,352.12 777.65,346.18 814.21,340.54 850.78,333.99 887.35,326.98 923.91,325.46 960.48,333.38 997.04,356.84 1033.61,387.61 1070.17,387.92 1106.74,387.92 1143.3,388.52" fill="none" stroke="#009000" stroke-width="3.1" stroke-linejoin="round" stroke-linecap="round" />
<polyline points="412,390.2 448.56,390.2 485.13,389.59 521.69,388.37 558.26,385.63 594.83,380.76 631.39,371.92 667.96,364.91 704.52,359.43 741.09,353.03 777.65,347.55 814.21,342.22 850.78,335.97 887.35,328.96 923.91,327.44 960.48,335.36 997.04,358.82 1033.61,389.59 1070.17,389.9 1106.74,389.9 1143.3,390.5" fill="none" stroke="#0000ff" stroke-width="3.2" stroke-linejoin="round" stroke-linecap="round" />
</g></svg>
<text x="613" y="289.6" font-size="17" fill="#ffffff" text-anchor="start" font-weight="normal" stroke="#fff" stroke-width="0.4" textLength="226" lengthAdjust="spacingAndGlyphs">RGB Balance, with Luminance</text>
<rect x="1187.5" y="34" width="302.5" height="292.5" fill="#232323"/>
<line x1="1182.5" y1="326.5" x2="1490" y2="326.5" stroke="#9c9c9c" stroke-width="1.4"/>
<text x="1183" y="332" font-size="13" fill="#e8e8e8" text-anchor="end" font-weight="normal" >0</text>
<line x1="1182.5" y1="297.25" x2="1490" y2="297.25" stroke="#9c9c9c" stroke-width="1.4"/>
<text x="1183" y="302.75" font-size="13" fill="#e8e8e8" text-anchor="end" font-weight="normal" >0,1</text>
<line x1="1182.5" y1="268" x2="1490" y2="268" stroke="#9c9c9c" stroke-width="1.4"/>
<text x="1183" y="273.5" font-size="13" fill="#e8e8e8" text-anchor="end" font-weight="normal" >0,2</text>
<line x1="1182.5" y1="238.75" x2="1490" y2="238.75" stroke="#9c9c9c" stroke-width="1.4"/>
<text x="1183" y="244.25" font-size="13" fill="#e8e8e8" text-anchor="end" font-weight="normal" >0,3</text>
<line x1="1182.5" y1="209.5" x2="1490" y2="209.5" stroke="#9c9c9c" stroke-width="1.4"/>
<text x="1183" y="215" font-size="13" fill="#e8e8e8" text-anchor="end" font-weight="normal" >0,4</text>
<line x1="1182.5" y1="180.25" x2="1490" y2="180.25" stroke="#9c9c9c" stroke-width="1.4"/>
<text x="1183" y="185.75" font-size="13" fill="#e8e8e8" text-anchor="end" font-weight="normal" >0,5</text>
<line x1="1182.5" y1="151" x2="1490" y2="151" stroke="#9c9c9c" stroke-width="1.4"/>
<text x="1183" y="156.5" font-size="13" fill="#e8e8e8" text-anchor="end" font-weight="normal" >0,6</text>
<line x1="1182.5" y1="121.75" x2="1490" y2="121.75" stroke="#9c9c9c" stroke-width="1.4"/>
<text x="1183" y="127.25" font-size="13" fill="#e8e8e8" text-anchor="end" font-weight="normal" >0,7</text>
<line x1="1182.5" y1="92.5" x2="1490" y2="92.5" stroke="#9c9c9c" stroke-width="1.4"/>
<text x="1183" y="98" font-size="13" fill="#e8e8e8" text-anchor="end" font-weight="normal" >0,8</text>
<line x1="1182.5" y1="63.25" x2="1490" y2="63.25" stroke="#9c9c9c" stroke-width="1.4"/>
<text x="1183" y="68.75" font-size="13" fill="#e8e8e8" text-anchor="end" font-weight="normal" >0,9</text>
<line x1="1182.5" y1="34" x2="1490" y2="34" stroke="#9c9c9c" stroke-width="1.4"/>
<text x="1183" y="39.5" font-size="13" fill="#e8e8e8" text-anchor="end" font-weight="normal" >1</text>
<rect x="1187.5" y="34" width="302.5" height="292.5" fill="none" stroke="#9c9c9c" stroke-width="1.4"/>
<line x1="1187.5" y1="326.5" x2="1187.5" y2="331.5" stroke="#9c9c9c" stroke-width="1.4"/>
<text x="1187.5" y="344" font-size="13" fill="#e8e8e8" text-anchor="middle" font-weight="normal" >0</text>
<line x1="1248" y1="326.5" x2="1248" y2="331.5" stroke="#9c9c9c" stroke-width="1.4"/>
<text x="1248" y="344" font-size="13" fill="#e8e8e8" text-anchor="middle" font-weight="normal" >20</text>
<line x1="1308.5" y1="326.5" x2="1308.5" y2="331.5" stroke="#9c9c9c" stroke-width="1.4"/>
<text x="1308.5" y="344" font-size="13" fill="#e8e8e8" text-anchor="middle" font-weight="normal" >40</text>
<line x1="1369" y1="326.5" x2="1369" y2="331.5" stroke="#9c9c9c" stroke-width="1.4"/>
<text x="1369" y="344" font-size="13" fill="#e8e8e8" text-anchor="middle" font-weight="normal" >60</text>
<line x1="1429.5" y1="326.5" x2="1429.5" y2="331.5" stroke="#9c9c9c" stroke-width="1.4"/>
<text x="1429.5" y="344" font-size="13" fill="#e8e8e8" text-anchor="middle" font-weight="normal" >80</text>
<line x1="1490" y1="326.5" x2="1490" y2="331.5" stroke="#9c9c9c" stroke-width="1.4"/>
<text x="1490" y="344" font-size="13" fill="#e8e8e8" text-anchor="middle" font-weight="normal" >100</text>
<svg x="1187.5" y="34" width="303.3" height="292.5" overflow="hidden"><g transform="translate(-1187.5,-34)">
<polyline points="1187.5,326.5 1190.53,322.4 1193.55,319.48 1196.58,316.56 1199.6,313.63 1202.62,310.7 1205.65,307.78 1208.67,304.86 1211.7,301.93 1214.72,299 1217.75,296.08 1220.78,293.15 1223.8,290.23 1226.83,287.31 1229.85,284.38 1232.88,281.45 1235.9,278.53 1238.92,275.61 1241.95,272.68 1244.97,269.75 1248,266.83 1251.03,263.9 1254.05,260.98 1257.08,258.06 1260.1,255.13 1263.12,252.2 1266.15,249.28 1269.17,246.35 1272.2,243.43 1275.22,240.5 1278.25,237.58 1281.28,234.66 1284.3,231.73 1287.33,228.81 1290.35,225.88 1293.38,222.96 1296.4,220.03 1299.42,217.11 1302.45,214.18 1305.47,211.25 1308.5,208.33 1311.53,205.41 1314.55,202.48 1317.58,199.56 1320.6,196.63 1323.62,193.7 1326.65,190.78 1329.67,187.86 1332.7,184.93 1335.72,182 1338.75,179.08 1341.78,176.16 1344.8,173.23 1347.83,170.3 1350.85,167.38 1353.88,164.45 1356.9,161.53 1359.92,158.61 1362.95,155.68 1365.97,152.75 1369,149.83 1372.03,146.91 1375.05,143.98 1378.08,141.06 1381.1,138.13 1384.12,135.2 1387.15,132.28 1390.17,129.35 1393.2,126.43 1396.22,123.51 1399.25,120.58 1402.28,117.66 1405.3,114.73 1408.33,111.81 1411.35,108.88 1414.38,105.96 1417.4,103.03 1420.42,100.1 1423.45,97.18 1426.47,94.25 1429.5,91.04 1432.53,88.41 1435.55,85.19 1438.58,82.56 1441.6,80.51 1444.62,79.34 1447.65,79.05 1450.67,79.05 1453.7,79.05 1456.72,79.05 1459.75,79.05 1462.78,79.05 1465.8,79.05 1468.83,79.05 1471.85,79.05 1474.88,79.05 1477.9,79.05 1480.92,79.05 1483.95,79.05 1486.97,79.05 1490,79.05" fill="none" stroke="#f2f200" stroke-width="2.7" stroke-linejoin="round" stroke-linecap="round" />
<polyline points="1187.5,326.5 1202.62,305.73 1217.75,284.67 1232.88,265.07 1248,248.69 1263.12,232.9 1278.25,216.23 1293.38,199.85 1308.5,183.76 1323.62,167.38 1338.75,151 1353.88,136.38 1369,121.75 1384.12,108.59 1399.25,96.89 1414.38,88.7 1429.5,81.97 1444.62,78.17 1459.75,78.17 1474.88,78.17 1490,78.46" fill="none" stroke="#959595" stroke-width="2.4" stroke-linejoin="round" stroke-linecap="round" />
</g></svg>
<text x="1328" y="28.5" font-size="12.5" fill="#e8e8e8" text-anchor="middle" font-weight="normal" >EOTF</text>
<rect x="1198.5" y="372.5" width="291.5" height="294" fill="#232323"/>
<line x1="1193.5" y1="666.5" x2="1490" y2="666.5" stroke="#9c9c9c" stroke-width="1.4"/>
<text x="1194" y="672" font-size="13" fill="#e8e8e8" text-anchor="end" font-weight="normal" >0</text>
<line x1="1193.5" y1="605.67" x2="1490" y2="605.67" stroke="#9c9c9c" stroke-width="1.4"/>
<text x="1194" y="611.17" font-size="13" fill="#e8e8e8" text-anchor="end" font-weight="normal" >500</text>
<line x1="1193.5" y1="544.85" x2="1490" y2="544.85" stroke="#9c9c9c" stroke-width="1.4"/>
<text x="1194" y="550.35" font-size="13" fill="#e8e8e8" text-anchor="end" font-weight="normal" >1000</text>
<line x1="1193.5" y1="484.02" x2="1490" y2="484.02" stroke="#9c9c9c" stroke-width="1.4"/>
<text x="1194" y="489.52" font-size="13" fill="#e8e8e8" text-anchor="end" font-weight="normal" >1500</text>
<line x1="1193.5" y1="423.2" x2="1490" y2="423.2" stroke="#9c9c9c" stroke-width="1.4"/>
<text x="1194" y="428.7" font-size="13" fill="#e8e8e8" text-anchor="end" font-weight="normal" >2000</text>
<rect x="1198.5" y="372.5" width="291.5" height="294" fill="none" stroke="#9c9c9c" stroke-width="1.4"/>
<line x1="1198.5" y1="666.5" x2="1198.5" y2="671.5" stroke="#9c9c9c" stroke-width="1.4"/>
<text x="1198.5" y="684" font-size="13" fill="#e8e8e8" text-anchor="middle" font-weight="normal" >0</text>
<line x1="1256.8" y1="666.5" x2="1256.8" y2="671.5" stroke="#9c9c9c" stroke-width="1.4"/>
<text x="1256.8" y="684" font-size="13" fill="#e8e8e8" text-anchor="middle" font-weight="normal" >20</text>
<line x1="1315.1" y1="666.5" x2="1315.1" y2="671.5" stroke="#9c9c9c" stroke-width="1.4"/>
<text x="1315.1" y="684" font-size="13" fill="#e8e8e8" text-anchor="middle" font-weight="normal" >40</text>
<line x1="1373.4" y1="666.5" x2="1373.4" y2="671.5" stroke="#9c9c9c" stroke-width="1.4"/>
<text x="1373.4" y="684" font-size="13" fill="#e8e8e8" text-anchor="middle" font-weight="normal" >60</text>
<line x1="1431.7" y1="666.5" x2="1431.7" y2="671.5" stroke="#9c9c9c" stroke-width="1.4"/>
<text x="1431.7" y="684" font-size="13" fill="#e8e8e8" text-anchor="middle" font-weight="normal" >80</text>
<line x1="1490" y1="666.5" x2="1490" y2="671.5" stroke="#9c9c9c" stroke-width="1.4"/>
<text x="1490" y="684" font-size="13" fill="#e8e8e8" text-anchor="middle" font-weight="normal" >100</text>
<svg x="1198.5" y="372.5" width="292.3" height="294" overflow="hidden"><g transform="translate(-1198.5,-372.5)">
<polyline points="1198.5,666.5 1213.08,666.44 1227.65,666.32 1242.22,666.14 1256.8,665.65 1271.38,664.8 1285.95,663.09 1300.53,659.81 1315.1,655.19 1329.67,649.35 1344.25,638.76 1358.83,622.83 1373.4,597.28 1387.97,558.23 1402.55,509.57 1417.12,459.33 1431.7,417.36 1446.28,381.23 1460.85,380.99 1475.42,380.01 1490,382.45" fill="none" stroke="#8e8e8e" stroke-width="2.6" stroke-linejoin="round" stroke-linecap="round" />
<polyline points="1198.5,666.5 1199.96,666.5 1201.41,666.5 1202.87,666.5 1204.33,666.5 1205.79,666.5 1207.24,666.5 1208.7,666.5 1210.16,666.5 1211.62,666.49 1213.08,666.49 1214.53,666.49 1215.99,666.49 1217.45,666.49 1218.9,666.48 1220.36,666.48 1221.82,666.48 1223.28,666.47 1224.73,666.47 1226.19,666.47 1227.65,666.46 1229.11,666.46 1230.57,666.45 1232.02,666.44 1233.48,666.44 1234.94,666.43 1236.39,666.42 1237.85,666.41 1239.31,666.4 1240.77,666.39 1242.22,666.38 1243.68,666.37 1245.14,666.35 1246.6,666.34 1248.06,666.32 1249.51,666.31 1250.97,666.29 1252.43,666.27 1253.88,666.25 1255.34,666.23 1256.8,666.2 1258.26,666.18 1259.71,666.15 1261.17,666.13 1262.63,666.1 1264.09,666.06 1265.55,666.03 1267,665.99 1268.46,665.96 1269.92,665.92 1271.38,665.87 1272.83,665.83 1274.29,665.78 1275.75,665.73 1277.2,665.67 1278.66,665.62 1280.12,665.56 1281.58,665.49 1283.04,665.43 1284.49,665.35 1285.95,665.28 1287.41,665.2 1288.87,665.12 1290.32,665.03 1291.78,664.93 1293.24,664.83 1294.69,664.73 1296.15,664.62 1297.61,664.51 1299.07,664.39 1300.53,664.26 1301.98,664.12 1303.44,663.98 1304.9,663.83 1306.36,663.68 1307.81,663.51 1309.27,663.34 1310.73,663.16 1312.18,662.96 1313.64,662.76 1315.1,662.55 1316.56,662.33 1318.02,662.1 1319.47,661.85 1320.93,661.6 1322.39,661.33 1323.85,661.04 1325.3,660.75 1326.76,660.44 1328.22,660.11 1329.67,659.77 1331.13,659.41 1332.59,659.03 1334.05,658.63 1335.51,658.22 1336.96,657.78 1338.42,657.33 1339.88,656.85 1341.34,656.35 1342.79,655.83 1344.25,655.28 1345.71,654.7 1347.16,654.1 1348.62,653.47 1350.08,652.81 1351.54,652.11 1352.99,651.39 1354.45,650.63 1355.91,649.83 1357.37,649 1358.83,648.13 1360.28,647.22 1361.74,646.26 1363.2,645.26 1364.65,644.21 1366.11,643.11 1367.57,641.97 1369.03,640.77 1370.49,639.51 1371.94,638.19 1373.4,636.82 1374.86,635.38 1376.32,633.87 1377.77,632.29 1379.23,630.64 1380.69,628.91 1382.14,627.1 1383.6,625.21 1385.06,623.23 1386.52,621.16 1387.97,619 1389.43,616.73 1390.89,614.36 1392.35,611.88 1393.81,609.28 1395.26,606.56 1396.72,603.72 1398.18,600.75 1399.63,597.63 1401.09,594.38 1402.55,590.97 1404.01,587.41 1405.46,583.67 1406.92,579.77 1408.38,575.69 1409.84,571.41 1411.3,566.94 1412.75,562.26 1414.21,557.36 1415.67,552.24 1417.12,546.87 1418.58,541.26 1420.04,535.38 1421.5,529.23 1422.95,522.79 1424.41,516.05 1425.87,509 1427.33,501.61 1428.79,493.88 1430.24,485.79 1431.7,477.31 1433.16,468.44 1434.62,459.15 1436.07,449.42 1437.53,439.23 1438.99,428.56 1440.44,417.38 1441.9,405.67 1443.36,393.41 1444.82,382.69 1446.28,382.69 1447.73,382.69 1449.19,382.69 1450.65,382.69 1452.11,382.69 1453.56,382.69 1455.02,382.69 1456.48,382.69 1457.93,382.69 1459.39,382.69 1460.85,382.69 1462.31,382.69 1463.76,382.69 1465.22,382.69 1466.68,382.69 1468.14,382.69 1469.6,382.69 1471.05,382.69 1472.51,382.69 1473.97,382.69 1475.42,382.69 1476.88,382.69 1478.34,382.69 1479.8,382.69 1481.26,382.69 1482.71,382.69 1484.17,382.69 1485.63,382.69 1487.09,382.69 1488.54,382.69 1490,382.69" fill="none" stroke="#f2f200" stroke-width="3" stroke-linejoin="round" stroke-linecap="round" />
</g></svg>
<text x="1328" y="370" font-size="12.5" fill="#e8e8e8" text-anchor="middle" font-weight="normal" >Luminance</text>
<text x="105" y="538" font-size="17" fill="#ffffff" text-anchor="start" font-weight="normal" stroke="#fff" stroke-width="0.4">Current Reading:</text>
<text x="105" y="571.5" font-size="21" fill="#ffffff" text-anchor="start" font-weight="normal" stroke="#fff" stroke-width="0.5">x: 0,3333</text>
<text x="105" y="605.5" font-size="21" fill="#ffffff" text-anchor="start" font-weight="normal" stroke="#fff" stroke-width="0.5">y: 0,3333</text>
<text x="105" y="639.5" font-size="21" fill="#ffffff" text-anchor="start" font-weight="normal" stroke="#fff" stroke-width="0.5">fL: 0</text>
<text x="105" y="674" font-size="21" fill="#ffffff" text-anchor="start" font-weight="normal" textLength="81" lengthAdjust="spacingAndGlyphs" stroke="#fff" stroke-width="0.5">cd/m²: 0</text>
<defs><linearGradient id="thd" x1="0" y1="0" x2="0" y2="1"><stop offset="0" stop-color="#303030"/><stop offset="0.54" stop-color="#2b2b2b"/><stop offset="0.56" stop-color="#171717"/><stop offset="1" stop-color="#131313"/></linearGradient></defs>
<rect x="301" y="509" width="594" height="170" fill="#111"/>
<svg x="302.5" y="510" width="591.5" height="169" overflow="hidden"><g transform="translate(-302.5,-510)">
<rect x="301" y="510" width="594" height="23" fill="url(#thd)"/>
<rect x="301" y="533" width="594" height="22" fill="#474747"/>
<text x="312.5" y="549.5" font-size="14" font-weight="bold" fill="#ffffff" textLength="10" lengthAdjust="spacingAndGlyphs">Y</text>
<text x="419" y="549.5" font-size="14.5" fill="#f4f4f4" textLength="31.8" lengthAdjust="spacingAndGlyphs">0,000</text>
<text x="459" y="549.5" font-size="14.5" fill="#f4f4f4" textLength="31.8" lengthAdjust="spacingAndGlyphs">0,129</text>
<text x="499" y="549.5" font-size="14.5" fill="#f4f4f4" textLength="31.8" lengthAdjust="spacingAndGlyphs">0,824</text>
<text x="538.6" y="549.5" font-size="14.5" fill="#f4f4f4" textLength="31.8" lengthAdjust="spacingAndGlyphs">2,603</text>
<text x="578.2" y="549.5" font-size="14.5" fill="#f4f4f4" textLength="31.8" lengthAdjust="spacingAndGlyphs">6,201</text>
<text x="618.3" y="549.5" font-size="14.5" fill="#f4f4f4" textLength="38.85" lengthAdjust="spacingAndGlyphs">13,076</text>
<text x="665.1" y="549.5" font-size="14.5" fill="#f4f4f4" textLength="38.85" lengthAdjust="spacingAndGlyphs">25,844</text>
<text x="712.4" y="549.5" font-size="14.5" fill="#f4f4f4" textLength="38.85" lengthAdjust="spacingAndGlyphs">47,180</text>
<text x="760" y="549.5" font-size="14.5" fill="#f4f4f4" textLength="38.85" lengthAdjust="spacingAndGlyphs">83,305</text>
<text x="807.3" y="549.5" font-size="14.5" fill="#f4f4f4" textLength="45.9" lengthAdjust="spacingAndGlyphs">142,340</text>
<text x="861.7" y="549.5" font-size="14.5" fill="#f4f4f4" textLength="31.8" lengthAdjust="spacingAndGlyphs">234,5</text>
<rect x="301" y="555" width="594" height="22" fill="#7b7b7b"/>
<text x="312.5" y="571.5" font-size="14" font-weight="bold" fill="#ffffff" textLength="51" lengthAdjust="spacingAndGlyphs">x: CIE31</text>
<text x="419" y="571.5" font-size="14.5" fill="#f4f4f4" textLength="31.8" lengthAdjust="spacingAndGlyphs">0,333</text>
<text x="459" y="571.5" font-size="14.5" fill="#f4f4f4" textLength="31.8" lengthAdjust="spacingAndGlyphs">0,307</text>
<text x="499" y="571.5" font-size="14.5" fill="#f4f4f4" textLength="31.8" lengthAdjust="spacingAndGlyphs">0,310</text>
<text x="538.6" y="571.5" font-size="14.5" fill="#f4f4f4" textLength="31.8" lengthAdjust="spacingAndGlyphs">0,312</text>
<text x="578.2" y="571.5" font-size="14.5" fill="#f4f4f4" textLength="31.8" lengthAdjust="spacingAndGlyphs">0,312</text>
<text x="618.3" y="571.5" font-size="14.5" fill="#f4f4f4" textLength="31.8" lengthAdjust="spacingAndGlyphs">0,312</text>
<text x="665.1" y="571.5" font-size="14.5" fill="#f4f4f4" textLength="31.8" lengthAdjust="spacingAndGlyphs">0,312</text>
<text x="712.4" y="571.5" font-size="14.5" fill="#f4f4f4" textLength="31.8" lengthAdjust="spacingAndGlyphs">0,313</text>
<text x="760" y="571.5" font-size="14.5" fill="#f4f4f4" textLength="31.8" lengthAdjust="spacingAndGlyphs">0,313</text>
<text x="807.3" y="571.5" font-size="14.5" fill="#f4f4f4" textLength="31.8" lengthAdjust="spacingAndGlyphs">0,313</text>
<text x="861.7" y="571.5" font-size="14.5" fill="#f4f4f4" textLength="31.8" lengthAdjust="spacingAndGlyphs">0,312</text>
<rect x="301" y="577" width="594" height="22" fill="#454545"/>
<text x="312.5" y="593.5" font-size="14" font-weight="bold" fill="#ffffff" textLength="51" lengthAdjust="spacingAndGlyphs">y: CIE31</text>
<text x="419" y="593.5" font-size="14.5" fill="#f4f4f4" textLength="31.8" lengthAdjust="spacingAndGlyphs">0,333</text>
<text x="459" y="593.5" font-size="14.5" fill="#f4f4f4" textLength="31.8" lengthAdjust="spacingAndGlyphs">0,346</text>
<text x="499" y="593.5" font-size="14.5" fill="#f4f4f4" textLength="31.8" lengthAdjust="spacingAndGlyphs">0,336</text>
<text x="538.6" y="593.5" font-size="14.5" fill="#f4f4f4" textLength="31.8" lengthAdjust="spacingAndGlyphs">0,335</text>
<text x="578.2" y="593.5" font-size="14.5" fill="#f4f4f4" textLength="31.8" lengthAdjust="spacingAndGlyphs">0,334</text>
<text x="618.3" y="593.5" font-size="14.5" fill="#f4f4f4" textLength="31.8" lengthAdjust="spacingAndGlyphs">0,332</text>
<text x="665.1" y="593.5" font-size="14.5" fill="#f4f4f4" textLength="31.8" lengthAdjust="spacingAndGlyphs">0,331</text>
<text x="712.4" y="593.5" font-size="14.5" fill="#f4f4f4" textLength="31.8" lengthAdjust="spacingAndGlyphs">0,332</text>
<text x="760" y="593.5" font-size="14.5" fill="#f4f4f4" textLength="31.8" lengthAdjust="spacingAndGlyphs">0,332</text>
<text x="807.3" y="593.5" font-size="14.5" fill="#f4f4f4" textLength="31.8" lengthAdjust="spacingAndGlyphs">0,331</text>
<text x="861.7" y="593.5" font-size="14.5" fill="#f4f4f4" textLength="31.8" lengthAdjust="spacingAndGlyphs">0,332</text>
<rect x="301" y="599" width="594" height="22" fill="#7a7a7a"/>
<text x="312.5" y="615.5" font-size="14" font-weight="bold" fill="#ffffff" textLength="53" lengthAdjust="spacingAndGlyphs">Target Y</text>
<text x="419" y="615.5" font-size="14.5" fill="#f4f4f4" textLength="31.8" lengthAdjust="spacingAndGlyphs">0,000</text>
<text x="459" y="615.5" font-size="14.5" fill="#f4f4f4" textLength="31.8" lengthAdjust="spacingAndGlyphs">0,061</text>
<text x="499" y="615.5" font-size="14.5" fill="#f4f4f4" textLength="31.8" lengthAdjust="spacingAndGlyphs">0,328</text>
<text x="538.6" y="615.5" font-size="14.5" fill="#f4f4f4" textLength="31.8" lengthAdjust="spacingAndGlyphs">1,015</text>
<text x="578.2" y="615.5" font-size="14.5" fill="#f4f4f4" textLength="31.8" lengthAdjust="spacingAndGlyphs">2,465</text>
<text x="618.3" y="615.5" font-size="14.5" fill="#f4f4f4" textLength="31.8" lengthAdjust="spacingAndGlyphs">5,238</text>
<text x="665.1" y="615.5" font-size="14.5" fill="#f4f4f4" textLength="38.85" lengthAdjust="spacingAndGlyphs">10,214</text>
<text x="712.4" y="615.5" font-size="14.5" fill="#f4f4f4" textLength="38.85" lengthAdjust="spacingAndGlyphs">18,781</text>
<text x="760" y="615.5" font-size="14.5" fill="#f4f4f4" textLength="38.85" lengthAdjust="spacingAndGlyphs">33,104</text>
<text x="807.3" y="615.5" font-size="14.5" fill="#f4f4f4" textLength="38.85" lengthAdjust="spacingAndGlyphs">56,554</text>
<text x="861.7" y="615.5" font-size="14.5" fill="#f4f4f4" textLength="31.8" lengthAdjust="spacingAndGlyphs">94,37</text>
<rect x="301" y="621" width="594" height="22" fill="#454545"/>
<text x="312.5" y="637.5" font-size="14" font-weight="bold" fill="#ffffff" textLength="91" lengthAdjust="spacingAndGlyphs">Target x:CIE31</text>
<text x="419" y="637.5" font-size="14.5" fill="#f4f4f4" textLength="31.8" lengthAdjust="spacingAndGlyphs">0,313</text>
<text x="459" y="637.5" font-size="14.5" fill="#f4f4f4" textLength="31.8" lengthAdjust="spacingAndGlyphs">0,313</text>
<text x="499" y="637.5" font-size="14.5" fill="#f4f4f4" textLength="31.8" lengthAdjust="spacingAndGlyphs">0,313</text>
<text x="538.6" y="637.5" font-size="14.5" fill="#f4f4f4" textLength="31.8" lengthAdjust="spacingAndGlyphs">0,313</text>
<text x="578.2" y="637.5" font-size="14.5" fill="#f4f4f4" textLength="31.8" lengthAdjust="spacingAndGlyphs">0,313</text>
<text x="618.3" y="637.5" font-size="14.5" fill="#f4f4f4" textLength="31.8" lengthAdjust="spacingAndGlyphs">0,313</text>
<text x="665.1" y="637.5" font-size="14.5" fill="#f4f4f4" textLength="31.8" lengthAdjust="spacingAndGlyphs">0,313</text>
<text x="712.4" y="637.5" font-size="14.5" fill="#f4f4f4" textLength="31.8" lengthAdjust="spacingAndGlyphs">0,313</text>
<text x="760" y="637.5" font-size="14.5" fill="#f4f4f4" textLength="31.8" lengthAdjust="spacingAndGlyphs">0,313</text>
<text x="807.3" y="637.5" font-size="14.5" fill="#f4f4f4" textLength="31.8" lengthAdjust="spacingAndGlyphs">0,313</text>
<text x="861.7" y="637.5" font-size="14.5" fill="#f4f4f4" textLength="31.8" lengthAdjust="spacingAndGlyphs">0,313</text>
<rect x="301" y="643" width="594" height="22" fill="#7a7a7a"/>
<text x="312.5" y="659.5" font-size="14" font-weight="bold" fill="#ffffff" textLength="91.5" lengthAdjust="spacingAndGlyphs">Target y:CIE31</text>
<text x="419" y="659.5" font-size="14.5" fill="#f4f4f4" textLength="31.8" lengthAdjust="spacingAndGlyphs">0,329</text>
<text x="459" y="659.5" font-size="14.5" fill="#f4f4f4" textLength="31.8" lengthAdjust="spacingAndGlyphs">0,329</text>
<text x="499" y="659.5" font-size="14.5" fill="#f4f4f4" textLength="31.8" lengthAdjust="spacingAndGlyphs">0,329</text>
<text x="538.6" y="659.5" font-size="14.5" fill="#f4f4f4" textLength="31.8" lengthAdjust="spacingAndGlyphs">0,329</text>
<text x="578.2" y="659.5" font-size="14.5" fill="#f4f4f4" textLength="31.8" lengthAdjust="spacingAndGlyphs">0,329</text>
<text x="618.3" y="659.5" font-size="14.5" fill="#f4f4f4" textLength="31.8" lengthAdjust="spacingAndGlyphs">0,329</text>
<text x="665.1" y="659.5" font-size="14.5" fill="#f4f4f4" textLength="31.8" lengthAdjust="spacingAndGlyphs">0,329</text>
<text x="712.4" y="659.5" font-size="14.5" fill="#f4f4f4" textLength="31.8" lengthAdjust="spacingAndGlyphs">0,329</text>
<text x="760" y="659.5" font-size="14.5" fill="#f4f4f4" textLength="31.8" lengthAdjust="spacingAndGlyphs">0,329</text>
<text x="807.3" y="659.5" font-size="14.5" fill="#f4f4f4" textLength="31.8" lengthAdjust="spacingAndGlyphs">0,329</text>
<text x="861.7" y="659.5" font-size="14.5" fill="#f4f4f4" textLength="31.8" lengthAdjust="spacingAndGlyphs">0,329</text>
<text x="434.9" y="526.5" font-size="13.5" font-weight="bold" fill="#ffffff" text-anchor="middle">0</text>
<text x="474.9" y="526.5" font-size="13.5" font-weight="bold" fill="#ffffff" text-anchor="middle">5</text>
<text x="514.9" y="526.5" font-size="13.5" font-weight="bold" fill="#ffffff" text-anchor="middle">10</text>
<text x="554.5" y="526.5" font-size="13.5" font-weight="bold" fill="#ffffff" text-anchor="middle">15</text>
<text x="594.1" y="526.5" font-size="13.5" font-weight="bold" fill="#ffffff" text-anchor="middle">20</text>
<text x="637.72" y="526.5" font-size="13.5" font-weight="bold" fill="#ffffff" text-anchor="middle">25</text>
<text x="684.52" y="526.5" font-size="13.5" font-weight="bold" fill="#ffffff" text-anchor="middle">30</text>
<text x="731.82" y="526.5" font-size="13.5" font-weight="bold" fill="#ffffff" text-anchor="middle">35</text>
<text x="779.42" y="526.5" font-size="13.5" font-weight="bold" fill="#ffffff" text-anchor="middle">40</text>
<text x="830.25" y="526.5" font-size="13.5" font-weight="bold" fill="#ffffff" text-anchor="middle">45</text>
<text x="883.2" y="526.5" font-size="13.5" font-weight="bold" fill="#ffffff" text-anchor="middle">50</text>
<rect x="301" y="665" width="594" height="14" fill="#5c5c5c"/>
<rect x="316" y="666" width="275" height="12" rx="6" fill="#464646"/>
<rect x="302" y="665.5" width="13.5" height="13" fill="#8a8a8a"/>
<polygon points="306,672 311,668 311,676" fill="#333"/>
<rect x="880" y="665.5" width="13.5" height="13" fill="#8a8a8a"/>
<polygon points="891,672 886,668 886,676" fill="#444"/>
</g></svg>
<rect x="932" y="518" width="212" height="153" fill="#232323"/>
<line x1="927" y1="655.7" x2="1144" y2="655.7" stroke="#9c9c9c" stroke-width="1.4"/>
<text x="927" y="661.2" font-size="13" fill="#e8e8e8" text-anchor="end" font-weight="normal" >96</text>
<line x1="927" y1="625.03" x2="1144" y2="625.03" stroke="#9c9c9c" stroke-width="1.4"/>
<text x="927" y="630.53" font-size="13" fill="#e8e8e8" text-anchor="end" font-weight="normal" >98</text>
<line x1="927" y1="594.35" x2="1144" y2="594.35" stroke="#9c9c9c" stroke-width="1.4"/>
<text x="927" y="599.85" font-size="13" fill="#e8e8e8" text-anchor="end" font-weight="normal" >100</text>
<line x1="927" y1="563.67" x2="1144" y2="563.67" stroke="#9c9c9c" stroke-width="1.4"/>
<text x="927" y="569.17" font-size="13" fill="#e8e8e8" text-anchor="end" font-weight="normal" >102</text>
<line x1="927" y1="533" x2="1144" y2="533" stroke="#9c9c9c" stroke-width="1.4"/>
<text x="927" y="538.5" font-size="13" fill="#e8e8e8" text-anchor="end" font-weight="normal" >104</text>
<rect x="932" y="518" width="212" height="153" fill="none" stroke="#9c9c9c" stroke-width="1.4"/>
<line x1="932" y1="671" x2="932" y2="677" stroke="#9c9c9c" stroke-width="1.4"/>
<line x1="1144" y1="671" x2="1144" y2="677" stroke="#9c9c9c" stroke-width="1.4"/>
<defs><linearGradient id="br" x1="0" y1="0" x2="0" y2="1"><stop offset="0" stop-color="#ff5050"/><stop offset="1" stop-color="#ff3c3c"/></linearGradient><linearGradient id="bg" x1="0" y1="0" x2="0" y2="1"><stop offset="0" stop-color="#52ab52"/><stop offset="1" stop-color="#3c9e3c"/></linearGradient><linearGradient id="bb" x1="0" y1="0" x2="0" y2="1"><stop offset="0" stop-color="#5050ff"/><stop offset="1" stop-color="#3c3cff"/></linearGradient></defs>
<rect x="952.5" y="595.5" width="55.5" height="75.5" fill="#000"/>
<rect x="953.5" y="596.5" width="53.5" height="74.5" fill="url(#br)"/>
<rect x="1009.5" y="595.5" width="55.5" height="75.5" fill="#000"/>
<rect x="1010.5" y="596.5" width="53.5" height="74.5" fill="url(#bg)"/>
<rect x="1066.5" y="595.5" width="55.0" height="75.5" fill="#000"/>
<rect x="1067.5" y="596.5" width="53.0" height="74.5" fill="url(#bb)"/>
<text x="1037" y="685" font-size="13" fill="#e8e8e8" text-anchor="middle" font-weight="normal" >0</text>
<rect x="0" y="690" width="1600" height="68" fill="#2b2b2b"/>
<defs><linearGradient id="tile" x1="0" y1="0" x2="0" y2="1"><stop offset="0" stop-color="#a6a6a6"/><stop offset="0.55" stop-color="#959595"/><stop offset="1" stop-color="#7e7e7e"/></linearGradient><linearGradient id="btn" x1="0" y1="0" x2="0" y2="1"><stop offset="0" stop-color="#a8a8a8"/><stop offset="1" stop-color="#7a7a7a"/></linearGradient><linearGradient id="btnd" x1="0" y1="0" x2="0" y2="1"><stop offset="0" stop-color="#3e3e3e"/><stop offset="1" stop-color="#2e2e2e"/></linearGradient><linearGradient id="circ" x1="0" y1="0" x2="0" y2="1"><stop offset="0" stop-color="#828282"/><stop offset="1" stop-color="#aaaaaa"/></linearGradient><linearGradient id="circd" x1="0" y1="0" x2="0" y2="1"><stop offset="0" stop-color="#262626"/><stop offset="1" stop-color="#3a3a3a"/></linearGradient><linearGradient id="ring" x1="0" y1="0" x2="0" y2="1"><stop offset="0" stop-color="#747474"/><stop offset="1" stop-color="#c0c0c0"/></linearGradient><linearGradient id="ringd" x1="0" y1="0" x2="0" y2="1"><stop offset="0" stop-color="#202020"/><stop offset="1" stop-color="#4a4a4a"/></linearGradient></defs>
<rect x="1.5" y="693.5" width="58" height="64" rx="4" fill="#343434" stroke="#262626" stroke-width="1"/>
<rect x="6.5" y="698.5" width="47.5" height="37.5" rx="4" fill="#000"/>
<text x="30" y="752.5" font-size="11" fill="#ffffff" text-anchor="middle" font-weight="bold" >0</text>
<rect x="61.55" y="693.5" width="58" height="64" rx="4" fill="url(#tile)" stroke="#6c6c6c" stroke-width="1"/>
<rect x="64.55" y="696.5" width="52" height="42" rx="3" fill="none" stroke="#b8b8b8" stroke-opacity="0.45" stroke-width="1"/>
<rect x="67.55" y="699.5" width="46" height="37" rx="3.5" fill="rgb(13,13,13)" stroke="#c8c8c8" stroke-opacity="0.35" stroke-width="1"/>
<text x="90.05" y="751.8" font-size="10.5" fill="#333333" text-anchor="middle" font-weight="normal" stroke="#333333" stroke-width="0.25">5</text>
<rect x="121.6" y="693.5" width="58" height="64" rx="4" fill="url(#tile)" stroke="#6c6c6c" stroke-width="1"/>
<rect x="124.6" y="696.5" width="52" height="42" rx="3" fill="none" stroke="#b8b8b8" stroke-opacity="0.45" stroke-width="1"/>
<rect x="127.6" y="699.5" width="46" height="37" rx="3.5" fill="rgb(26,26,26)" stroke="#c8c8c8" stroke-opacity="0.35" stroke-width="1"/>
<text x="150.1" y="751.8" font-size="10.5" fill="#333333" text-anchor="middle" font-weight="normal" stroke="#333333" stroke-width="0.25">10</text>
<rect x="181.64999999999998" y="693.5" width="58" height="64" rx="4" fill="url(#tile)" stroke="#6c6c6c" stroke-width="1"/>
<rect x="184.64999999999998" y="696.5" width="52" height="42" rx="3" fill="none" stroke="#b8b8b8" stroke-opacity="0.45" stroke-width="1"/>
<rect x="187.64999999999998" y="699.5" width="46" height="37" rx="3.5" fill="rgb(38,38,38)" stroke="#c8c8c8" stroke-opacity="0.35" stroke-width="1"/>
<text x="210.15" y="751.8" font-size="10.5" fill="#333333" text-anchor="middle" font-weight="normal" stroke="#333333" stroke-width="0.25">15</text>
<rect x="241.7" y="693.5" width="58" height="64" rx="4" fill="url(#tile)" stroke="#6c6c6c" stroke-width="1"/>
<rect x="244.7" y="696.5" width="52" height="42" rx="3" fill="none" stroke="#b8b8b8" stroke-opacity="0.45" stroke-width="1"/>
<rect x="247.7" y="699.5" width="46" height="37" rx="3.5" fill="rgb(51,51,51)" stroke="#c8c8c8" stroke-opacity="0.35" stroke-width="1"/>
<text x="270.2" y="751.8" font-size="10.5" fill="#333333" text-anchor="middle" font-weight="normal" stroke="#333333" stroke-width="0.25">20</text>
<rect x="301.75" y="693.5" width="58" height="64" rx="4" fill="url(#tile)" stroke="#6c6c6c" stroke-width="1"/>
<rect x="304.75" y="696.5" width="52" height="42" rx="3" fill="none" stroke="#b8b8b8" stroke-opacity="0.45" stroke-width="1"/>
<rect x="307.75" y="699.5" width="46" height="37" rx="3.5" fill="rgb(64,64,64)" stroke="#c8c8c8" stroke-opacity="0.35" stroke-width="1"/>
<text x="330.25" y="751.8" font-size="10.5" fill="#333333" text-anchor="middle" font-weight="normal" stroke="#333333" stroke-width="0.25">25</text>
<rect x="361.79999999999995" y="693.5" width="58" height="64" rx="4" fill="url(#tile)" stroke="#6c6c6c" stroke-width="1"/>
<rect x="364.79999999999995" y="696.5" width="52" height="42" rx="3" fill="none" stroke="#b8b8b8" stroke-opacity="0.45" stroke-width="1"/>
<rect x="367.79999999999995" y="699.5" width="46" height="37" rx="3.5" fill="rgb(76,76,76)" stroke="#c8c8c8" stroke-opacity="0.35" stroke-width="1"/>
<text x="390.3" y="751.8" font-size="10.5" fill="#333333" text-anchor="middle" font-weight="normal" stroke="#333333" stroke-width="0.25">30</text>
<rect x="421.84999999999997" y="693.5" width="58" height="64" rx="4" fill="url(#tile)" stroke="#6c6c6c" stroke-width="1"/>
<rect x="424.84999999999997" y="696.5" width="52" height="42" rx="3" fill="none" stroke="#b8b8b8" stroke-opacity="0.45" stroke-width="1"/>
<rect x="427.84999999999997" y="699.5" width="46" height="37" rx="3.5" fill="rgb(89,89,89)" stroke="#c8c8c8" stroke-opacity="0.35" stroke-width="1"/>
<text x="450.35" y="751.8" font-size="10.5" fill="#333333" text-anchor="middle" font-weight="normal" stroke="#333333" stroke-width="0.25">35</text>
<rect x="481.9" y="693.5" width="58" height="64" rx="4" fill="url(#tile)" stroke="#6c6c6c" stroke-width="1"/>
<rect x="484.9" y="696.5" width="52" height="42" rx="3" fill="none" stroke="#b8b8b8" stroke-opacity="0.45" stroke-width="1"/>
<rect x="487.9" y="699.5" width="46" height="37" rx="3.5" fill="rgb(102,102,102)" stroke="#c8c8c8" stroke-opacity="0.35" stroke-width="1"/>
<text x="510.4" y="751.8" font-size="10.5" fill="#333333" text-anchor="middle" font-weight="normal" stroke="#333333" stroke-width="0.25">40</text>
<rect x="541.9499999999999" y="693.5" width="58" height="64" rx="4" fill="url(#tile)" stroke="#6c6c6c" stroke-width="1"/>
<rect x="544.9499999999999" y="696.5" width="52" height="42" rx="3" fill="none" stroke="#b8b8b8" stroke-opacity="0.45" stroke-width="1"/>
<rect x="547.9499999999999" y="699.5" width="46" height="37" rx="3.5" fill="rgb(115,115,115)" stroke="#c8c8c8" stroke-opacity="0.35" stroke-width="1"/>
<text x="570.45" y="751.8" font-size="10.5" fill="#333333" text-anchor="middle" font-weight="normal" stroke="#333333" stroke-width="0.25">45</text>
<rect x="602.0" y="693.5" width="58" height="64" rx="4" fill="url(#tile)" stroke="#6c6c6c" stroke-width="1"/>
<rect x="605.0" y="696.5" width="52" height="42" rx="3" fill="none" stroke="#b8b8b8" stroke-opacity="0.45" stroke-width="1"/>
<rect x="608.0" y="699.5" width="46" height="37" rx="3.5" fill="rgb(128,128,128)" stroke="#c8c8c8" stroke-opacity="0.35" stroke-width="1"/>
<text x="630.5" y="751.8" font-size="10.5" fill="#333333" text-anchor="middle" font-weight="normal" stroke="#333333" stroke-width="0.25">50</text>
<rect x="662.05" y="693.5" width="58" height="64" rx="4" fill="url(#tile)" stroke="#6c6c6c" stroke-width="1"/>
<rect x="665.05" y="696.5" width="52" height="42" rx="3" fill="none" stroke="#b8b8b8" stroke-opacity="0.45" stroke-width="1"/>
<rect x="668.05" y="699.5" width="46" height="37" rx="3.5" fill="rgb(140,140,140)" stroke="#c8c8c8" stroke-opacity="0.35" stroke-width="1"/>
<text x="690.55" y="751.8" font-size="10.5" fill="#333333" text-anchor="middle" font-weight="normal" stroke="#333333" stroke-width="0.25">55</text>
<rect x="722.0999999999999" y="693.5" width="58" height="64" rx="4" fill="url(#tile)" stroke="#6c6c6c" stroke-width="1"/>
<rect x="725.0999999999999" y="696.5" width="52" height="42" rx="3" fill="none" stroke="#b8b8b8" stroke-opacity="0.45" stroke-width="1"/>
<rect x="728.0999999999999" y="699.5" width="46" height="37" rx="3.5" fill="rgb(153,153,153)" stroke="#c8c8c8" stroke-opacity="0.35" stroke-width="1"/>
<text x="750.6" y="751.8" font-size="10.5" fill="#333333" text-anchor="middle" font-weight="normal" stroke="#333333" stroke-width="0.25">60</text>
<rect x="782.15" y="693.5" width="58" height="64" rx="4" fill="url(#tile)" stroke="#6c6c6c" stroke-width="1"/>
<rect x="785.15" y="696.5" width="52" height="42" rx="3" fill="none" stroke="#b8b8b8" stroke-opacity="0.45" stroke-width="1"/>
<rect x="788.15" y="699.5" width="46" height="37" rx="3.5" fill="rgb(166,166,166)" stroke="#c8c8c8" stroke-opacity="0.35" stroke-width="1"/>
<text x="810.65" y="751.8" font-size="10.5" fill="#333333" text-anchor="middle" font-weight="normal" stroke="#333333" stroke-width="0.25">65</text>
<rect x="842.1999999999999" y="693.5" width="58" height="64" rx="4" fill="url(#tile)" stroke="#6c6c6c" stroke-width="1"/>
<rect x="845.1999999999999" y="696.5" width="52" height="42" rx="3" fill="none" stroke="#b8b8b8" stroke-opacity="0.45" stroke-width="1"/>
<rect x="848.1999999999999" y="699.5" width="46" height="37" rx="3.5" fill="rgb(178,178,178)" stroke="#c8c8c8" stroke-opacity="0.35" stroke-width="1"/>
<text x="870.7" y="751.8" font-size="10.5" fill="#333333" text-anchor="middle" font-weight="normal" stroke="#333333" stroke-width="0.25">70</text>
<rect x="902.25" y="693.5" width="58" height="64" rx="4" fill="url(#tile)" stroke="#6c6c6c" stroke-width="1"/>
<rect x="905.25" y="696.5" width="52" height="42" rx="3" fill="none" stroke="#b8b8b8" stroke-opacity="0.45" stroke-width="1"/>
<rect x="908.25" y="699.5" width="46" height="37" rx="3.5" fill="rgb(191,191,191)" stroke="#c8c8c8" stroke-opacity="0.35" stroke-width="1"/>
<text x="930.75" y="751.8" font-size="10.5" fill="#333333" text-anchor="middle" font-weight="normal" stroke="#333333" stroke-width="0.25">75</text>
<rect x="962.3" y="693.5" width="58" height="64" rx="4" fill="url(#tile)" stroke="#6c6c6c" stroke-width="1"/>
<rect x="965.3" y="696.5" width="52" height="42" rx="3" fill="none" stroke="#b8b8b8" stroke-opacity="0.45" stroke-width="1"/>
<rect x="968.3" y="699.5" width="46" height="37" rx="3.5" fill="rgb(204,204,204)" stroke="#c8c8c8" stroke-opacity="0.35" stroke-width="1"/>
<text x="990.8" y="751.8" font-size="10.5" fill="#333333" text-anchor="middle" font-weight="normal" stroke="#333333" stroke-width="0.25">80</text>
<rect x="1022.3499999999999" y="693.5" width="58" height="64" rx="4" fill="url(#tile)" stroke="#6c6c6c" stroke-width="1"/>
<rect x="1025.35" y="696.5" width="52" height="42" rx="3" fill="none" stroke="#b8b8b8" stroke-opacity="0.45" stroke-width="1"/>
<rect x="1028.35" y="699.5" width="46" height="37" rx="3.5" fill="rgb(217,217,217)" stroke="#c8c8c8" stroke-opacity="0.35" stroke-width="1"/>
<text x="1050.85" y="751.8" font-size="10.5" fill="#333333" text-anchor="middle" font-weight="normal" stroke="#333333" stroke-width="0.25">85</text>
<rect x="1082.3999999999999" y="693.5" width="58" height="64" rx="4" fill="url(#tile)" stroke="#6c6c6c" stroke-width="1"/>
<rect x="1085.3999999999999" y="696.5" width="52" height="42" rx="3" fill="none" stroke="#b8b8b8" stroke-opacity="0.45" stroke-width="1"/>
<rect x="1088.3999999999999" y="699.5" width="46" height="37" rx="3.5" fill="rgb(230,230,230)" stroke="#c8c8c8" stroke-opacity="0.35" stroke-width="1"/>
<text x="1110.9" y="751.8" font-size="10.5" fill="#333333" text-anchor="middle" font-weight="normal" stroke="#333333" stroke-width="0.25">90</text>
<rect x="1142.45" y="693.5" width="58" height="64" rx="4" fill="url(#tile)" stroke="#6c6c6c" stroke-width="1"/>
<rect x="1145.45" y="696.5" width="52" height="42" rx="3" fill="none" stroke="#b8b8b8" stroke-opacity="0.45" stroke-width="1"/>
<rect x="1148.45" y="699.5" width="46" height="37" rx="3.5" fill="rgb(242,242,242)" stroke="#c8c8c8" stroke-opacity="0.35" stroke-width="1"/>
<text x="1170.95" y="751.8" font-size="10.5" fill="#333333" text-anchor="middle" font-weight="normal" stroke="#333333" stroke-width="0.25">95</text>
<rect x="1202.5" y="693.5" width="58" height="64" rx="4" fill="url(#tile)" stroke="#6c6c6c" stroke-width="1"/>
<rect x="1205.5" y="696.5" width="52" height="42" rx="3" fill="none" stroke="#b8b8b8" stroke-opacity="0.45" stroke-width="1"/>
<rect x="1208.5" y="699.5" width="46" height="37" rx="3.5" fill="rgb(255,255,255)" stroke="#c8c8c8" stroke-opacity="0.35" stroke-width="1"/>
<text x="1231" y="751.8" font-size="10.5" fill="#333333" text-anchor="middle" font-weight="normal" stroke="#333333" stroke-width="0.25">100</text>
<rect x="1263.5" y="693.5" width="49.5" height="64" rx="3" fill="url(#tile)" stroke="#555" stroke-width="1"/>
<line x1="1264" y1="712" x2="1313" y2="712" stroke="#4a4a4a" stroke-width="1.5"/>
<circle cx="1288.5" cy="702.5" r="7" fill="url(#circ)" stroke="url(#ring)" stroke-width="1"/>
<polygon points="1284,705 1293,705 1288.5,700" fill="#222"/>
<rect x="1273.5" y="719.5" width="30" height="30.5" rx="4" fill="#a2a2a2" stroke="#111" stroke-width="2.5"/>
<rect x="1281.5" y="728" width="14.5" height="14" fill="#000"/>
<rect x="1314" y="693" width="48" height="31.5" rx="2" fill="url(#btn)"/>
<circle cx="1338" cy="708.8" r="9.8" fill="url(#circ)" stroke="url(#ring)" stroke-width="1.2"/>
<rect x="1363.5" y="693" width="45.5" height="31.5" rx="2" fill="url(#btn)"/>
<circle cx="1386.25" cy="708.8" r="9.8" fill="url(#circ)" stroke="url(#ring)" stroke-width="1.2"/>
<rect x="1410.5" y="693" width="45.5" height="31.5" rx="2" fill="url(#btn)"/>
<circle cx="1433.25" cy="708.8" r="9.8" fill="url(#circ)" stroke="url(#ring)" stroke-width="1.2"/>
<rect x="1457" y="693" width="46" height="31.5" rx="2" fill="url(#btn)"/>
<circle cx="1480" cy="708.8" r="9.8" fill="url(#circ)" stroke="url(#ring)" stroke-width="1.2"/>
<rect x="1504" y="693" width="46" height="31.5" rx="2" fill="url(#btnd)"/>
<circle cx="1527" cy="708.8" r="9.8" fill="url(#circd)" stroke="url(#ringd)" stroke-width="1.2"/>
<rect x="1551" y="693" width="47" height="31.5" rx="2" fill="url(#btn)"/>
<circle cx="1574.5" cy="708.8" r="9.8" fill="url(#circ)" stroke="url(#ring)" stroke-width="1.2"/>
<rect x="1334.3" y="704.5" width="8.6" height="8.6" fill="#2a2a2a"/>
<polygon points="1382.5,703.5 1382.5,714 1391.5,708.8" fill="#2a2a2a"/>
<path d="M1429.6,704.4 h-1.8 v10 h1.8 M1436.6,704.4 h1.8 v10 h-1.8" fill="none" stroke="#262626" stroke-width="1.9"/>
<circle cx="1431.4" cy="709" r="1.3" fill="#2a2a2a"/><circle cx="1434.4" cy="709" r="1.3" fill="#2a2a2a"/>
<path d="M1480.5,708.8 c-2,-3.5 -6.5,-3.5 -6.5,0 c0,3.5 4.5,3.5 6.5,0 c2,-3.5 6.5,-3.5 6.5,0 c0,3.5 -4.5,3.5 -6.5,0z" fill="none" stroke="#2a2a2a" stroke-width="2"/>
<path d="M1522,706.5 a5,5 0 0 1 9,-1 M1531,711 a5,5 0 0 1 -9,1" fill="none" stroke="#111" stroke-width="2.5"/>
<rect x="1314" y="725.5" width="142" height="32.5" rx="3" fill="url(#btn)"/>
<rect x="1457" y="725.5" width="141" height="32.5" rx="3" fill="url(#btn)"/>
<circle cx="1346.5" cy="741.6" r="9.8" fill="url(#circ)" stroke="url(#ring)" stroke-width="1.2"/>
<circle cx="1568.5" cy="741.6" r="9.8" fill="url(#circ)" stroke="url(#ring)" stroke-width="1.2"/>
<path d="M1345,736.5 l-5,5 l5,5 M1350,736.5 l-5,5 l5,5" fill="none" stroke="#2a2a2a" stroke-width="1.8"/>
<path d="M1566,736.5 l5,5 l-5,5 M1571,736.5 l5,5 l-5,5" fill="none" stroke="#2a2a2a" stroke-width="1.8"/>
<text x="1374" y="749" font-size="22.5" fill="#333333" text-anchor="start" font-weight="normal" textLength="53" lengthAdjust="spacingAndGlyphs" stroke="#333" stroke-width="0.6">Back</text>
<text x="1485" y="749" font-size="22.5" fill="#333333" text-anchor="start" font-weight="normal" textLength="55" lengthAdjust="spacingAndGlyphs" stroke="#333" stroke-width="0.6">Next</text>
<defs><linearGradient id="redge" x1="0" y1="0" x2="1" y2="0"><stop offset="0" stop-color="#333" stop-opacity="0"/><stop offset="1" stop-color="#1c1c1c"/></linearGradient></defs>
<rect x="1594.5" y="0" width="3.5" height="692" fill="url(#redge)"/>
<rect x="1598" y="0" width="2" height="758" fill="#1c1c1c"/>
<rect x="0" y="0" width="1600" height="1" fill="#2a2a2a"/>
<rect x="0" y="1" width="1600" height="2" fill="#383838"/>
</svg></body></html>
